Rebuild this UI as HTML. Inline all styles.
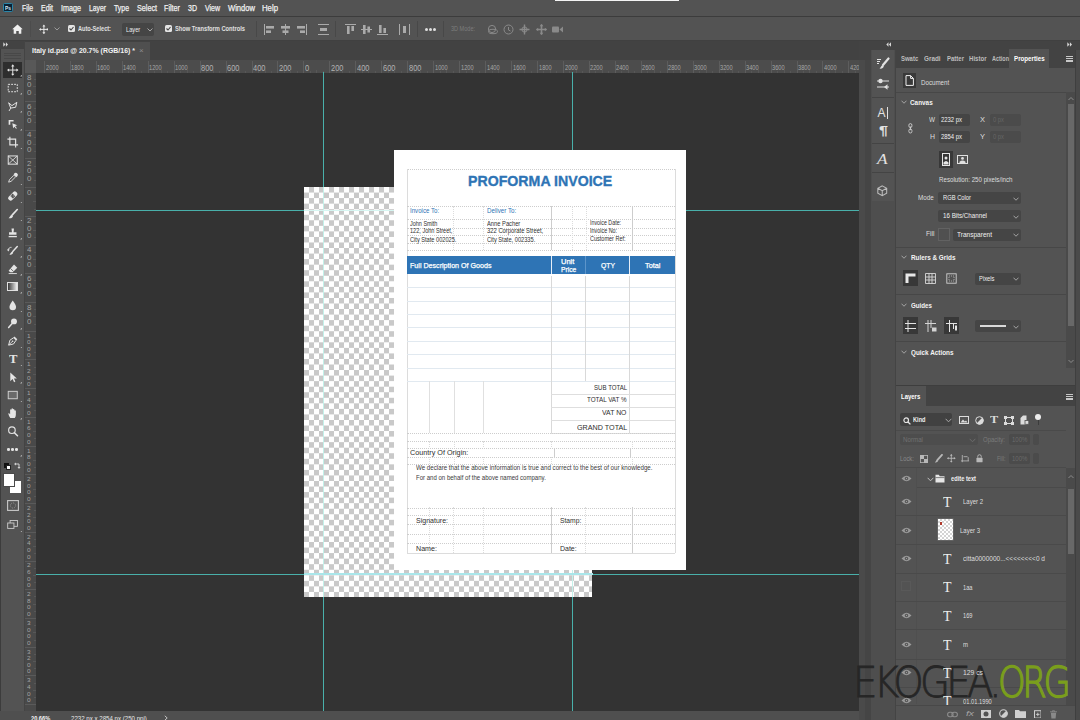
<!DOCTYPE html>
<html lang="en"><head><meta charset="utf-8"><title>Italy id.psd @ 20.7% (RGB/16)</title>
<style>
html,body{margin:0;padding:0}
body{width:1080px;height:720px;position:relative;overflow:hidden;background:#535353;font-family:"Liberation Sans",sans-serif}
#app{position:absolute;left:0;top:0;width:1080px;height:720px;overflow:hidden}
#app div,#app span,#app svg{position:absolute;display:block}
#app span{white-space:nowrap;transform-origin:0 50%}
</style></head><body><div id="app">
<div style="left:0px;top:0px;width:1080px;height:16px;background:#535353;"></div>
<div style="left:0px;top:16.3px;width:1080px;height:1px;background:#3c3c3c;"></div>
<div style="left:555px;top:0px;width:123.5px;height:1.2px;background:#f4f4f4;"></div>
<div style="left:3.4px;top:3.2px;width:9.8px;height:9.2px;background:#0a2236;border:1px solid #2a86a8;box-sizing:border-box;border-radius:1.5px"></div>
<span style="left:5.2px;top:4.5px;font-size:5.5px;line-height:7px;color:#d6ecfa;font-weight:bold;transform:scale(0.892,1.000);">Ps</span>
<span style="left:22px;top:3.4px;font-size:9px;line-height:11px;color:#f0f0f0;transform:scale(0.759,1.000);-webkit-text-stroke:0.25px #f0f0f0;">File</span>
<span style="left:41px;top:3.4px;font-size:9px;line-height:11px;color:#f0f0f0;transform:scale(0.774,1.000);-webkit-text-stroke:0.25px #f0f0f0;">Edit</span>
<span style="left:61px;top:3.4px;font-size:9px;line-height:11px;color:#f0f0f0;transform:scale(0.800,1.000);-webkit-text-stroke:0.25px #f0f0f0;">Image</span>
<span style="left:89px;top:3.4px;font-size:9px;line-height:11px;color:#f0f0f0;transform:scale(0.755,1.000);-webkit-text-stroke:0.25px #f0f0f0;">Layer</span>
<span style="left:114px;top:3.4px;font-size:9px;line-height:11px;color:#f0f0f0;transform:scale(0.769,1.000);-webkit-text-stroke:0.25px #f0f0f0;">Type</span>
<span style="left:137px;top:3.4px;font-size:9px;line-height:11px;color:#f0f0f0;transform:scale(0.800,1.000);-webkit-text-stroke:0.25px #f0f0f0;">Select</span>
<span style="left:164px;top:3.4px;font-size:9px;line-height:11px;color:#f0f0f0;transform:scale(0.800,1.000);-webkit-text-stroke:0.25px #f0f0f0;">Filter</span>
<span style="left:188px;top:3.4px;font-size:9px;line-height:11px;color:#f0f0f0;transform:scale(0.782,1.000);-webkit-text-stroke:0.25px #f0f0f0;">3D</span>
<span style="left:205px;top:3.4px;font-size:9px;line-height:11px;color:#f0f0f0;transform:scale(0.775,1.000);-webkit-text-stroke:0.25px #f0f0f0;">View</span>
<span style="left:228px;top:3.4px;font-size:9px;line-height:11px;color:#f0f0f0;transform:scale(0.844,1.000);-webkit-text-stroke:0.25px #f0f0f0;">Window</span>
<span style="left:262px;top:3.4px;font-size:9px;line-height:11px;color:#f0f0f0;transform:scale(0.864,1.000);-webkit-text-stroke:0.25px #f0f0f0;">Help</span>
<div style="left:0px;top:17px;width:1080px;height:24px;background:#535353;"></div>
<div style="left:0px;top:40px;width:1080px;height:1px;background:#404040;"></div>
<svg style="left:12px;top:23.8px;" width="11" height="10.4" viewBox="0 0 13 12"><path d="M6.5 0.5 L0.3 6.2 H2 V11.5 H5 V8 H8 V11.5 H11 V6.2 H12.7 Z" fill="#f0f0f0"/></svg>
<div style="left:30px;top:21px;width:1px;height:16px;background:#4c4c4c;"></div>
<svg style="left:38.5px;top:23.6px;" width="9.8" height="10.8" viewBox="0 0 12 12"><g stroke="#e8e8e8" stroke-width="1.2" fill="#e8e8e8"><path d="M6 1.5V10.5M1.5 6H10.5" fill="none"/><path d="M6 0L7.8 2.4H4.2Z M6 12L7.8 9.6H4.2Z M0 6L2.4 4.2V7.8Z M12 6L9.6 4.2V7.8Z" stroke="none"/></g></svg>
<svg style="left:54px;top:27px;" width="6" height="4" viewBox="0 0 6 4"><path d="M0.5 0.5L3 3L5.5 0.5" stroke="#9a9a9a" fill="none" stroke-width="1"/></svg>
<div style="left:68px;top:25px;width:7px;height:7px;background:#e4e4e4;border-radius:1.5px"></div>
<svg style="left:68px;top:25px;" width="7" height="7" viewBox="0 0 7 7"><path d="M1.5 3.5L3 5L5.5 2" stroke="#444" fill="none" stroke-width="1.1"/></svg>
<span style="left:78px;top:24.0px;font-size:8px;line-height:10px;color:#e0e0e0;font-weight:bold;transform:scale(0.700,1.000);">Auto-Select:</span>
<div style="left:122px;top:23.2px;width:31.6px;height:12.6px;background:#454545;border-radius:2px"></div>
<span style="left:126.3px;top:24.6px;font-size:8px;line-height:10px;color:#ececec;transform:scale(0.710,1.000);">Layer</span>
<svg style="left:147.2px;top:28px;" width="5.4" height="3.8" viewBox="0 0 5.4 3.8"><path d="M0.5 0.5L3 3L5.5 0.5" stroke="#aaa" fill="none" stroke-width="1"/></svg>
<div style="left:165px;top:25px;width:7px;height:7px;background:#e4e4e4;border-radius:1.5px"></div>
<svg style="left:165px;top:25px;" width="7" height="7" viewBox="0 0 7 7"><path d="M1.5 3.5L3 5L5.5 2" stroke="#444" fill="none" stroke-width="1.1"/></svg>
<span style="left:175px;top:24.0px;font-size:8px;line-height:10px;color:#e0e0e0;font-weight:bold;transform:scale(0.716,1.000);">Show Transform Controls</span>
<div style="left:256px;top:21px;width:1px;height:16px;background:#484848;"></div>
<svg style="left:264px;top:24px;" width="11" height="11" viewBox="0 0 11 11"><path d="M0.5 0V11" stroke="#aaaaaa"/><rect x="2" y="2" width="8" height="2.6" fill="#aaaaaa"/><rect x="2" y="6.4" width="5" height="2.6" fill="#aaaaaa"/></svg>
<svg style="left:280px;top:24px;" width="11" height="11" viewBox="0 0 11 11"><path d="M5.5 0V11" stroke="#aaaaaa"/><rect x="1" y="2" width="9" height="2.6" fill="#aaaaaa"/><rect x="2.5" y="6.4" width="6" height="2.6" fill="#aaaaaa"/></svg>
<svg style="left:296px;top:24px;" width="11" height="11" viewBox="0 0 11 11"><path d="M10.5 0V11" stroke="#aaaaaa"/><rect x="1" y="2" width="8" height="2.6" fill="#aaaaaa"/><rect x="4" y="6.4" width="5" height="2.6" fill="#aaaaaa"/></svg>
<svg style="left:318px;top:24px;" width="11" height="11" viewBox="0 0 11 11"><path d="M0 0.5H11M0 10.5H11" stroke="#aaaaaa"/><rect x="2" y="4" width="7" height="3" fill="#aaaaaa"/></svg>
<div style="left:335px;top:21px;width:1px;height:16px;background:#484848;"></div>
<svg style="left:345px;top:24px;" width="11" height="11" viewBox="0 0 11 11"><path d="M0 0.5H11" stroke="#aaaaaa"/><rect x="2" y="2" width="2.6" height="8" fill="#aaaaaa"/><rect x="6.4" y="2" width="2.6" height="5" fill="#aaaaaa"/></svg>
<svg style="left:361px;top:24px;" width="11" height="11" viewBox="0 0 11 11"><path d="M0 5.5H11" stroke="#aaaaaa"/><rect x="2" y="1" width="2.6" height="9" fill="#aaaaaa"/><rect x="6.4" y="2.5" width="2.6" height="6" fill="#aaaaaa"/></svg>
<svg style="left:377px;top:24px;" width="11" height="11" viewBox="0 0 11 11"><path d="M0 10.5H11" stroke="#aaaaaa"/><rect x="2" y="1" width="2.6" height="8" fill="#aaaaaa"/><rect x="6.4" y="4" width="2.6" height="5" fill="#aaaaaa"/></svg>
<svg style="left:399px;top:24px;" width="11" height="11" viewBox="0 0 11 11"><path d="M0.5 0V11M10.5 0V11" stroke="#aaaaaa"/><rect x="4" y="2" width="3" height="7" fill="#aaaaaa"/></svg>
<div style="left:417px;top:21px;width:1px;height:16px;background:#484848;"></div>
<div style="left:425.4px;top:27.6px;width:3px;height:3px;border-radius:50%;background:#e0e0e0"></div>
<div style="left:429.3px;top:27.6px;width:3px;height:3px;border-radius:50%;background:#e0e0e0"></div>
<div style="left:433.2px;top:27.6px;width:3px;height:3px;border-radius:50%;background:#e0e0e0"></div>
<div style="left:443px;top:21px;width:1px;height:16px;background:#484848;"></div>
<span style="left:451px;top:25.0px;font-size:7px;line-height:8px;color:#7d7d7d;transform:scale(0.791,1.000);">3D Mode:</span>
<svg style="left:487px;top:24px;" width="11" height="11" viewBox="0 0 11 11"><circle cx="5" cy="5" r="3.6" fill="none" stroke="#8a8a8a"/><ellipse cx="6" cy="7.5" rx="4.5" ry="2.2" fill="none" stroke="#8a8a8a"/></svg>
<svg style="left:503px;top:24px;" width="11" height="11" viewBox="0 0 11 11"><circle cx="5.5" cy="5.5" r="4.5" fill="none" stroke="#8a8a8a"/><path d="M5.5 3V6L7.5 7" fill="none" stroke="#8a8a8a"/></svg>
<svg style="left:519px;top:24px;" width="11" height="11" viewBox="0 0 11 11"><path d="M5.5 0.5V10.5M0.5 5.5H10.5" stroke="#8a8a8a" stroke-width="1.4"/><circle cx="5.5" cy="5.5" r="2.6" fill="none" stroke="#8a8a8a"/></svg>
<svg style="left:536px;top:24px;" width="11" height="11" viewBox="0 0 11 11"><path d="M5.5 0.5V10.5M0.5 5.5H10.5" stroke="#8a8a8a" stroke-width="1.6"/><path d="M5.5 0L7.3 2.2H3.7Z M5.5 11L7.3 8.8H3.7Z M0 5.5L2.2 3.7V7.3Z M11 5.5L8.8 3.7V7.3Z" fill="#8a8a8a"/></svg>
<svg style="left:552px;top:25px;" width="12" height="9" viewBox="0 0 12 9"><rect x="0" y="1.5" width="7" height="6" rx="1" fill="#8a8a8a"/><path d="M7.5 4.5L11 1.5V7.5Z" fill="#8a8a8a"/></svg>
<div style="left:0px;top:41px;width:1080px;height:20px;background:#424242;"></div>
<div style="left:25px;top:42px;width:125px;height:18.5px;background:#4f4f4f;"></div>
<span style="left:32px;top:46.3px;font-size:8px;line-height:10px;color:#f2f2f2;font-weight:bold;transform:scale(0.869,1.000);">Italy id.psd @ 20.7% (RGB/16) *</span>
<span style="left:139px;top:46.0px;font-size:8px;line-height:10px;color:#8c8c8c;">×</span>
<div style="left:36px;top:72px;width:823px;height:639px;background:#333333;"></div>
<div style="left:25px;top:60px;width:834px;height:13px;background:#4c4c4c;"></div>
<div style="left:25px;top:60px;width:11px;height:651px;background:#494949;"></div>
<div style="left:25px;top:60px;width:11px;height:13px;background:#585858;"></div>
<div style="left:43.9px;top:61px;width:1px;height:12px;background:#5d5d5d;"></div>
<span style="left:45.49999999999998px;top:64.0px;font-size:6.6px;line-height:8px;color:#a6a6a6;transform:scale(0.858,1.000);">2000</span>
<div style="left:50.4px;top:71px;width:1px;height:2px;background:#575757;"></div>
<div style="left:56.9px;top:70px;width:1px;height:3px;background:#575757;"></div>
<div style="left:63.4px;top:71px;width:1px;height:2px;background:#575757;"></div>
<div style="left:69.8px;top:61px;width:1px;height:12px;background:#5d5d5d;"></div>
<span style="left:71.44999999999999px;top:64.0px;font-size:6.6px;line-height:8px;color:#a6a6a6;transform:scale(0.858,1.000);">1800</span>
<div style="left:76.3px;top:71px;width:1px;height:2px;background:#575757;"></div>
<div style="left:82.8px;top:70px;width:1px;height:3px;background:#575757;"></div>
<div style="left:89.3px;top:71px;width:1px;height:2px;background:#575757;"></div>
<div style="left:95.8px;top:61px;width:1px;height:12px;background:#5d5d5d;"></div>
<span style="left:97.39999999999998px;top:64.0px;font-size:6.6px;line-height:8px;color:#a6a6a6;transform:scale(0.858,1.000);">1600</span>
<div style="left:102.3px;top:71px;width:1px;height:2px;background:#575757;"></div>
<div style="left:108.8px;top:70px;width:1px;height:3px;background:#575757;"></div>
<div style="left:115.3px;top:71px;width:1px;height:2px;background:#575757;"></div>
<div style="left:121.7px;top:61px;width:1px;height:12px;background:#5d5d5d;"></div>
<span style="left:123.34999999999997px;top:64.0px;font-size:6.6px;line-height:8px;color:#a6a6a6;transform:scale(0.858,1.000);">1400</span>
<div style="left:128.2px;top:71px;width:1px;height:2px;background:#575757;"></div>
<div style="left:134.7px;top:70px;width:1px;height:3px;background:#575757;"></div>
<div style="left:141.2px;top:71px;width:1px;height:2px;background:#575757;"></div>
<div style="left:147.7px;top:61px;width:1px;height:12px;background:#5d5d5d;"></div>
<span style="left:149.29999999999998px;top:64.0px;font-size:6.6px;line-height:8px;color:#a6a6a6;transform:scale(0.858,1.000);">1200</span>
<div style="left:154.2px;top:71px;width:1px;height:2px;background:#575757;"></div>
<div style="left:160.7px;top:70px;width:1px;height:3px;background:#575757;"></div>
<div style="left:167.2px;top:71px;width:1px;height:2px;background:#575757;"></div>
<div style="left:173.6px;top:61px;width:1px;height:12px;background:#5d5d5d;"></div>
<span style="left:175.24999999999997px;top:64.0px;font-size:6.6px;line-height:8px;color:#a6a6a6;transform:scale(0.858,1.000);">1000</span>
<div style="left:180.1px;top:71px;width:1px;height:2px;background:#575757;"></div>
<div style="left:186.6px;top:70px;width:1px;height:3px;background:#575757;"></div>
<div style="left:193.1px;top:71px;width:1px;height:2px;background:#575757;"></div>
<div style="left:199.6px;top:61px;width:1px;height:12px;background:#5d5d5d;"></div>
<span style="left:200.99999999999997px;top:62.5px;font-size:8.8px;line-height:11px;color:#b2b2b2;transform:scale(0.845,1.000);">800</span>
<div style="left:206.1px;top:71px;width:1px;height:2px;background:#575757;"></div>
<div style="left:212.6px;top:70px;width:1px;height:3px;background:#575757;"></div>
<div style="left:219.1px;top:71px;width:1px;height:2px;background:#575757;"></div>
<div style="left:225.5px;top:61px;width:1px;height:12px;background:#5d5d5d;"></div>
<span style="left:226.95px;top:62.5px;font-size:8.8px;line-height:11px;color:#b2b2b2;transform:scale(0.845,1.000);">600</span>
<div style="left:232.0px;top:71px;width:1px;height:2px;background:#575757;"></div>
<div style="left:238.5px;top:70px;width:1px;height:3px;background:#575757;"></div>
<div style="left:245.0px;top:71px;width:1px;height:2px;background:#575757;"></div>
<div style="left:251.5px;top:61px;width:1px;height:12px;background:#5d5d5d;"></div>
<span style="left:252.89999999999998px;top:62.5px;font-size:8.8px;line-height:11px;color:#b2b2b2;transform:scale(0.845,1.000);">400</span>
<div style="left:258.0px;top:71px;width:1px;height:2px;background:#575757;"></div>
<div style="left:264.5px;top:70px;width:1px;height:3px;background:#575757;"></div>
<div style="left:271.0px;top:71px;width:1px;height:2px;background:#575757;"></div>
<div style="left:277.4px;top:61px;width:1px;height:12px;background:#5d5d5d;"></div>
<span style="left:278.84999999999997px;top:62.5px;font-size:8.8px;line-height:11px;color:#b2b2b2;transform:scale(0.845,1.000);">200</span>
<div style="left:283.9px;top:71px;width:1px;height:2px;background:#575757;"></div>
<div style="left:290.4px;top:70px;width:1px;height:3px;background:#575757;"></div>
<div style="left:296.9px;top:71px;width:1px;height:2px;background:#575757;"></div>
<div style="left:303.4px;top:61px;width:1px;height:12px;background:#5d5d5d;"></div>
<span style="left:305.0px;top:62.5px;font-size:8.8px;line-height:11px;color:#b2b2b2;transform:scale(0.858,1.000);">0</span>
<div style="left:309.9px;top:71px;width:1px;height:2px;background:#575757;"></div>
<div style="left:316.4px;top:70px;width:1px;height:3px;background:#575757;"></div>
<div style="left:322.9px;top:71px;width:1px;height:2px;background:#575757;"></div>
<div style="left:329.3px;top:61px;width:1px;height:12px;background:#5d5d5d;"></div>
<span style="left:330.74999999999994px;top:62.5px;font-size:8.8px;line-height:11px;color:#b2b2b2;transform:scale(0.845,1.000);">200</span>
<div style="left:335.8px;top:71px;width:1px;height:2px;background:#575757;"></div>
<div style="left:342.3px;top:70px;width:1px;height:3px;background:#575757;"></div>
<div style="left:348.8px;top:71px;width:1px;height:2px;background:#575757;"></div>
<div style="left:355.3px;top:61px;width:1px;height:12px;background:#5d5d5d;"></div>
<span style="left:356.69999999999993px;top:62.5px;font-size:8.8px;line-height:11px;color:#b2b2b2;transform:scale(0.845,1.000);">400</span>
<div style="left:361.8px;top:71px;width:1px;height:2px;background:#575757;"></div>
<div style="left:368.3px;top:70px;width:1px;height:3px;background:#575757;"></div>
<div style="left:374.8px;top:71px;width:1px;height:2px;background:#575757;"></div>
<div style="left:381.2px;top:61px;width:1px;height:12px;background:#5d5d5d;"></div>
<span style="left:382.65px;top:62.5px;font-size:8.8px;line-height:11px;color:#b2b2b2;transform:scale(0.845,1.000);">600</span>
<div style="left:387.7px;top:71px;width:1px;height:2px;background:#575757;"></div>
<div style="left:394.2px;top:70px;width:1px;height:3px;background:#575757;"></div>
<div style="left:400.7px;top:71px;width:1px;height:2px;background:#575757;"></div>
<div style="left:407.2px;top:61px;width:1px;height:12px;background:#5d5d5d;"></div>
<span style="left:408.59999999999997px;top:62.5px;font-size:8.8px;line-height:11px;color:#b2b2b2;transform:scale(0.845,1.000);">800</span>
<div style="left:413.7px;top:71px;width:1px;height:2px;background:#575757;"></div>
<div style="left:420.2px;top:70px;width:1px;height:3px;background:#575757;"></div>
<div style="left:426.7px;top:71px;width:1px;height:2px;background:#575757;"></div>
<div style="left:433.1px;top:61px;width:1px;height:12px;background:#5d5d5d;"></div>
<span style="left:434.75px;top:64.0px;font-size:6.6px;line-height:8px;color:#a6a6a6;transform:scale(0.858,1.000);">1000</span>
<div style="left:439.6px;top:71px;width:1px;height:2px;background:#575757;"></div>
<div style="left:446.1px;top:70px;width:1px;height:3px;background:#575757;"></div>
<div style="left:452.6px;top:71px;width:1px;height:2px;background:#575757;"></div>
<div style="left:459.1px;top:61px;width:1px;height:12px;background:#5d5d5d;"></div>
<span style="left:460.7px;top:64.0px;font-size:6.6px;line-height:8px;color:#a6a6a6;transform:scale(0.858,1.000);">1200</span>
<div style="left:465.6px;top:71px;width:1px;height:2px;background:#575757;"></div>
<div style="left:472.1px;top:70px;width:1px;height:3px;background:#575757;"></div>
<div style="left:478.6px;top:71px;width:1px;height:2px;background:#575757;"></div>
<div style="left:485.0px;top:61px;width:1px;height:12px;background:#5d5d5d;"></div>
<span style="left:486.65px;top:64.0px;font-size:6.6px;line-height:8px;color:#a6a6a6;transform:scale(0.858,1.000);">1400</span>
<div style="left:491.5px;top:71px;width:1px;height:2px;background:#575757;"></div>
<div style="left:498.0px;top:70px;width:1px;height:3px;background:#575757;"></div>
<div style="left:504.5px;top:71px;width:1px;height:2px;background:#575757;"></div>
<div style="left:511.0px;top:61px;width:1px;height:12px;background:#5d5d5d;"></div>
<span style="left:512.6px;top:64.0px;font-size:6.6px;line-height:8px;color:#a6a6a6;transform:scale(0.858,1.000);">1600</span>
<div style="left:517.5px;top:71px;width:1px;height:2px;background:#575757;"></div>
<div style="left:524.0px;top:70px;width:1px;height:3px;background:#575757;"></div>
<div style="left:530.5px;top:71px;width:1px;height:2px;background:#575757;"></div>
<div style="left:536.9px;top:61px;width:1px;height:12px;background:#5d5d5d;"></div>
<span style="left:538.55px;top:64.0px;font-size:6.6px;line-height:8px;color:#a6a6a6;transform:scale(0.858,1.000);">1800</span>
<div style="left:543.4px;top:71px;width:1px;height:2px;background:#575757;"></div>
<div style="left:549.9px;top:70px;width:1px;height:3px;background:#575757;"></div>
<div style="left:556.4px;top:71px;width:1px;height:2px;background:#575757;"></div>
<div style="left:562.9px;top:61px;width:1px;height:12px;background:#5d5d5d;"></div>
<span style="left:564.5px;top:64.0px;font-size:6.6px;line-height:8px;color:#a6a6a6;transform:scale(0.858,1.000);">2000</span>
<div style="left:569.4px;top:71px;width:1px;height:2px;background:#575757;"></div>
<div style="left:575.9px;top:70px;width:1px;height:3px;background:#575757;"></div>
<div style="left:582.4px;top:71px;width:1px;height:2px;background:#575757;"></div>
<div style="left:588.8px;top:61px;width:1px;height:12px;background:#5d5d5d;"></div>
<span style="left:590.4499999999999px;top:64.0px;font-size:6.6px;line-height:8px;color:#a6a6a6;transform:scale(0.858,1.000);">2200</span>
<div style="left:595.3px;top:71px;width:1px;height:2px;background:#575757;"></div>
<div style="left:601.8px;top:70px;width:1px;height:3px;background:#575757;"></div>
<div style="left:608.3px;top:71px;width:1px;height:2px;background:#575757;"></div>
<div style="left:614.8px;top:61px;width:1px;height:12px;background:#5d5d5d;"></div>
<span style="left:616.4px;top:64.0px;font-size:6.6px;line-height:8px;color:#a6a6a6;transform:scale(0.858,1.000);">2400</span>
<div style="left:621.3px;top:71px;width:1px;height:2px;background:#575757;"></div>
<div style="left:627.8px;top:70px;width:1px;height:3px;background:#575757;"></div>
<div style="left:634.3px;top:71px;width:1px;height:2px;background:#575757;"></div>
<div style="left:640.8px;top:61px;width:1px;height:12px;background:#5d5d5d;"></div>
<span style="left:642.35px;top:64.0px;font-size:6.6px;line-height:8px;color:#a6a6a6;transform:scale(0.858,1.000);">2600</span>
<div style="left:647.2px;top:71px;width:1px;height:2px;background:#575757;"></div>
<div style="left:653.7px;top:70px;width:1px;height:3px;background:#575757;"></div>
<div style="left:660.2px;top:71px;width:1px;height:2px;background:#575757;"></div>
<div style="left:666.7px;top:61px;width:1px;height:12px;background:#5d5d5d;"></div>
<span style="left:668.3000000000001px;top:64.0px;font-size:6.6px;line-height:8px;color:#a6a6a6;transform:scale(0.858,1.000);">2800</span>
<div style="left:673.2px;top:71px;width:1px;height:2px;background:#575757;"></div>
<div style="left:679.7px;top:70px;width:1px;height:3px;background:#575757;"></div>
<div style="left:686.2px;top:71px;width:1px;height:2px;background:#575757;"></div>
<div style="left:692.6px;top:61px;width:1px;height:12px;background:#5d5d5d;"></div>
<span style="left:694.25px;top:64.0px;font-size:6.6px;line-height:8px;color:#a6a6a6;transform:scale(0.858,1.000);">3000</span>
<div style="left:699.1px;top:71px;width:1px;height:2px;background:#575757;"></div>
<div style="left:705.6px;top:70px;width:1px;height:3px;background:#575757;"></div>
<div style="left:712.1px;top:71px;width:1px;height:2px;background:#575757;"></div>
<div style="left:718.6px;top:61px;width:1px;height:12px;background:#5d5d5d;"></div>
<span style="left:720.1999999999999px;top:64.0px;font-size:6.6px;line-height:8px;color:#a6a6a6;transform:scale(0.858,1.000);">3200</span>
<div style="left:725.1px;top:71px;width:1px;height:2px;background:#575757;"></div>
<div style="left:731.6px;top:70px;width:1px;height:3px;background:#575757;"></div>
<div style="left:738.1px;top:71px;width:1px;height:2px;background:#575757;"></div>
<div style="left:744.5px;top:61px;width:1px;height:12px;background:#5d5d5d;"></div>
<span style="left:746.15px;top:64.0px;font-size:6.6px;line-height:8px;color:#a6a6a6;transform:scale(0.858,1.000);">3400</span>
<div style="left:751.0px;top:71px;width:1px;height:2px;background:#575757;"></div>
<div style="left:757.5px;top:70px;width:1px;height:3px;background:#575757;"></div>
<div style="left:764.0px;top:71px;width:1px;height:2px;background:#575757;"></div>
<div style="left:770.5px;top:61px;width:1px;height:12px;background:#5d5d5d;"></div>
<span style="left:772.1px;top:64.0px;font-size:6.6px;line-height:8px;color:#a6a6a6;transform:scale(0.858,1.000);">3600</span>
<div style="left:777.0px;top:71px;width:1px;height:2px;background:#575757;"></div>
<div style="left:783.5px;top:70px;width:1px;height:3px;background:#575757;"></div>
<div style="left:790.0px;top:71px;width:1px;height:2px;background:#575757;"></div>
<div style="left:796.5px;top:61px;width:1px;height:12px;background:#5d5d5d;"></div>
<span style="left:798.0500000000001px;top:64.0px;font-size:6.6px;line-height:8px;color:#a6a6a6;transform:scale(0.858,1.000);">3800</span>
<div style="left:802.9px;top:71px;width:1px;height:2px;background:#575757;"></div>
<div style="left:809.4px;top:70px;width:1px;height:3px;background:#575757;"></div>
<div style="left:815.9px;top:71px;width:1px;height:2px;background:#575757;"></div>
<div style="left:822.4px;top:61px;width:1px;height:12px;background:#5d5d5d;"></div>
<span style="left:824.0px;top:64.0px;font-size:6.6px;line-height:8px;color:#a6a6a6;transform:scale(0.858,1.000);">4000</span>
<div style="left:828.9px;top:71px;width:1px;height:2px;background:#575757;"></div>
<div style="left:835.4px;top:70px;width:1px;height:3px;background:#575757;"></div>
<div style="left:841.9px;top:71px;width:1px;height:2px;background:#575757;"></div>
<div style="left:848.3px;top:61px;width:1px;height:12px;background:#5d5d5d;"></div>
<span style="left:849.9499999999999px;top:64.0px;font-size:6.6px;line-height:8px;color:#a6a6a6;transform:scale(0.858,1.000);">4200</span>
<div style="left:854.8px;top:71px;width:1px;height:2px;background:#575757;"></div>
<span style="left:26.6px;top:72.8px;font-size:7.6px;line-height:9px;color:#a4a4a4;transform:scale(1.041,1.000);">8</span>
<span style="left:26.6px;top:80.2px;font-size:7.6px;line-height:9px;color:#a4a4a4;transform:scale(1.041,1.000);">0</span>
<span style="left:26.6px;top:87.6px;font-size:7.6px;line-height:9px;color:#a4a4a4;transform:scale(1.041,1.000);">0</span>
<div style="left:34px;top:79.3px;width:2px;height:1px;background:#575757;"></div>
<div style="left:33px;top:86.4px;width:3px;height:1px;background:#575757;"></div>
<div style="left:34px;top:93.6px;width:2px;height:1px;background:#575757;"></div>
<div style="left:25px;top:100.8px;width:11px;height:1px;background:#5a5a5a;"></div>
<span style="left:26.6px;top:101.5px;font-size:7.6px;line-height:9px;color:#a4a4a4;transform:scale(1.041,1.000);">6</span>
<span style="left:26.6px;top:108.9px;font-size:7.6px;line-height:9px;color:#a4a4a4;transform:scale(1.041,1.000);">0</span>
<span style="left:26.6px;top:116.3px;font-size:7.6px;line-height:9px;color:#a4a4a4;transform:scale(1.041,1.000);">0</span>
<div style="left:34px;top:108.0px;width:2px;height:1px;background:#575757;"></div>
<div style="left:33px;top:115.2px;width:3px;height:1px;background:#575757;"></div>
<div style="left:34px;top:122.4px;width:2px;height:1px;background:#575757;"></div>
<div style="left:25px;top:129.5px;width:11px;height:1px;background:#5a5a5a;"></div>
<span style="left:26.6px;top:130.2px;font-size:7.6px;line-height:9px;color:#a4a4a4;transform:scale(1.041,1.000);">4</span>
<span style="left:26.6px;top:137.6px;font-size:7.6px;line-height:9px;color:#a4a4a4;transform:scale(1.041,1.000);">0</span>
<span style="left:26.6px;top:145.0px;font-size:7.6px;line-height:9px;color:#a4a4a4;transform:scale(1.041,1.000);">0</span>
<div style="left:34px;top:136.7px;width:2px;height:1px;background:#575757;"></div>
<div style="left:33px;top:143.9px;width:3px;height:1px;background:#575757;"></div>
<div style="left:34px;top:151.1px;width:2px;height:1px;background:#575757;"></div>
<div style="left:25px;top:158.3px;width:11px;height:1px;background:#5a5a5a;"></div>
<span style="left:26.6px;top:159.0px;font-size:7.6px;line-height:9px;color:#a4a4a4;transform:scale(1.041,1.000);">2</span>
<span style="left:26.6px;top:166.4px;font-size:7.6px;line-height:9px;color:#a4a4a4;transform:scale(1.041,1.000);">0</span>
<span style="left:26.6px;top:173.8px;font-size:7.6px;line-height:9px;color:#a4a4a4;transform:scale(1.041,1.000);">0</span>
<div style="left:34px;top:165.5px;width:2px;height:1px;background:#575757;"></div>
<div style="left:33px;top:172.6px;width:3px;height:1px;background:#575757;"></div>
<div style="left:34px;top:179.8px;width:2px;height:1px;background:#575757;"></div>
<div style="left:25px;top:187.0px;width:11px;height:1px;background:#5a5a5a;"></div>
<span style="left:26.6px;top:187.7px;font-size:7.6px;line-height:9px;color:#a4a4a4;transform:scale(1.041,1.000);">0</span>
<div style="left:34px;top:194.2px;width:2px;height:1px;background:#575757;"></div>
<div style="left:33px;top:201.4px;width:3px;height:1px;background:#575757;"></div>
<div style="left:34px;top:208.5px;width:2px;height:1px;background:#575757;"></div>
<div style="left:25px;top:215.7px;width:11px;height:1px;background:#5a5a5a;"></div>
<span style="left:26.6px;top:216.4px;font-size:7.6px;line-height:9px;color:#a4a4a4;transform:scale(1.041,1.000);">2</span>
<span style="left:26.6px;top:223.8px;font-size:7.6px;line-height:9px;color:#a4a4a4;transform:scale(1.041,1.000);">0</span>
<span style="left:26.6px;top:231.2px;font-size:7.6px;line-height:9px;color:#a4a4a4;transform:scale(1.041,1.000);">0</span>
<div style="left:34px;top:222.9px;width:2px;height:1px;background:#575757;"></div>
<div style="left:33px;top:230.1px;width:3px;height:1px;background:#575757;"></div>
<div style="left:34px;top:237.3px;width:2px;height:1px;background:#575757;"></div>
<div style="left:25px;top:244.5px;width:11px;height:1px;background:#5a5a5a;"></div>
<span style="left:26.6px;top:245.2px;font-size:7.6px;line-height:9px;color:#a4a4a4;transform:scale(1.041,1.000);">4</span>
<span style="left:26.6px;top:252.6px;font-size:7.6px;line-height:9px;color:#a4a4a4;transform:scale(1.041,1.000);">0</span>
<span style="left:26.6px;top:260.0px;font-size:7.6px;line-height:9px;color:#a4a4a4;transform:scale(1.041,1.000);">0</span>
<div style="left:34px;top:251.6px;width:2px;height:1px;background:#575757;"></div>
<div style="left:33px;top:258.8px;width:3px;height:1px;background:#575757;"></div>
<div style="left:34px;top:266.0px;width:2px;height:1px;background:#575757;"></div>
<div style="left:25px;top:273.2px;width:11px;height:1px;background:#5a5a5a;"></div>
<span style="left:26.6px;top:273.9px;font-size:7.6px;line-height:9px;color:#a4a4a4;transform:scale(1.041,1.000);">6</span>
<span style="left:26.6px;top:281.3px;font-size:7.6px;line-height:9px;color:#a4a4a4;transform:scale(1.041,1.000);">0</span>
<span style="left:26.6px;top:288.7px;font-size:7.6px;line-height:9px;color:#a4a4a4;transform:scale(1.041,1.000);">0</span>
<div style="left:34px;top:280.4px;width:2px;height:1px;background:#575757;"></div>
<div style="left:33px;top:287.6px;width:3px;height:1px;background:#575757;"></div>
<div style="left:34px;top:294.7px;width:2px;height:1px;background:#575757;"></div>
<div style="left:25px;top:301.9px;width:11px;height:1px;background:#5a5a5a;"></div>
<span style="left:26.6px;top:302.6px;font-size:7.6px;line-height:9px;color:#a4a4a4;transform:scale(1.041,1.000);">8</span>
<span style="left:26.6px;top:310.0px;font-size:7.6px;line-height:9px;color:#a4a4a4;transform:scale(1.041,1.000);">0</span>
<span style="left:26.6px;top:317.4px;font-size:7.6px;line-height:9px;color:#a4a4a4;transform:scale(1.041,1.000);">0</span>
<div style="left:34px;top:309.1px;width:2px;height:1px;background:#575757;"></div>
<div style="left:33px;top:316.3px;width:3px;height:1px;background:#575757;"></div>
<div style="left:34px;top:323.5px;width:2px;height:1px;background:#575757;"></div>
<div style="left:25px;top:330.6px;width:11px;height:1px;background:#5a5a5a;"></div>
<span style="left:26.6px;top:332.5px;font-size:5.8px;line-height:7px;color:#a4a4a4;transform:scale(1.116,1.000);">1</span>
<span style="left:26.6px;top:339.1px;font-size:5.8px;line-height:7px;color:#a4a4a4;transform:scale(1.116,1.000);">0</span>
<span style="left:26.6px;top:345.7px;font-size:5.8px;line-height:7px;color:#a4a4a4;transform:scale(1.116,1.000);">0</span>
<span style="left:26.6px;top:352.3px;font-size:5.8px;line-height:7px;color:#a4a4a4;transform:scale(1.116,1.000);">0</span>
<div style="left:34px;top:337.8px;width:2px;height:1px;background:#575757;"></div>
<div style="left:33px;top:345.0px;width:3px;height:1px;background:#575757;"></div>
<div style="left:34px;top:352.2px;width:2px;height:1px;background:#575757;"></div>
<div style="left:25px;top:359.4px;width:11px;height:1px;background:#5a5a5a;"></div>
<span style="left:26.6px;top:361.3px;font-size:5.8px;line-height:7px;color:#a4a4a4;transform:scale(1.116,1.000);">1</span>
<span style="left:26.6px;top:367.9px;font-size:5.8px;line-height:7px;color:#a4a4a4;transform:scale(1.116,1.000);">2</span>
<span style="left:26.6px;top:374.5px;font-size:5.8px;line-height:7px;color:#a4a4a4;transform:scale(1.116,1.000);">0</span>
<span style="left:26.6px;top:381.1px;font-size:5.8px;line-height:7px;color:#a4a4a4;transform:scale(1.116,1.000);">0</span>
<div style="left:34px;top:366.6px;width:2px;height:1px;background:#575757;"></div>
<div style="left:33px;top:373.7px;width:3px;height:1px;background:#575757;"></div>
<div style="left:34px;top:380.9px;width:2px;height:1px;background:#575757;"></div>
<div style="left:25px;top:388.1px;width:11px;height:1px;background:#5a5a5a;"></div>
<span style="left:26.6px;top:390.0px;font-size:5.8px;line-height:7px;color:#a4a4a4;transform:scale(1.116,1.000);">1</span>
<span style="left:26.6px;top:396.6px;font-size:5.8px;line-height:7px;color:#a4a4a4;transform:scale(1.116,1.000);">4</span>
<span style="left:26.6px;top:403.2px;font-size:5.8px;line-height:7px;color:#a4a4a4;transform:scale(1.116,1.000);">0</span>
<span style="left:26.6px;top:409.8px;font-size:5.8px;line-height:7px;color:#a4a4a4;transform:scale(1.116,1.000);">0</span>
<div style="left:34px;top:395.3px;width:2px;height:1px;background:#575757;"></div>
<div style="left:33px;top:402.5px;width:3px;height:1px;background:#575757;"></div>
<div style="left:34px;top:409.7px;width:2px;height:1px;background:#575757;"></div>
<div style="left:25px;top:416.8px;width:11px;height:1px;background:#5a5a5a;"></div>
<span style="left:26.6px;top:418.7px;font-size:5.8px;line-height:7px;color:#a4a4a4;transform:scale(1.116,1.000);">1</span>
<span style="left:26.6px;top:425.3px;font-size:5.8px;line-height:7px;color:#a4a4a4;transform:scale(1.116,1.000);">6</span>
<span style="left:26.6px;top:431.9px;font-size:5.8px;line-height:7px;color:#a4a4a4;transform:scale(1.116,1.000);">0</span>
<span style="left:26.6px;top:438.5px;font-size:5.8px;line-height:7px;color:#a4a4a4;transform:scale(1.116,1.000);">0</span>
<div style="left:34px;top:424.0px;width:2px;height:1px;background:#575757;"></div>
<div style="left:33px;top:431.2px;width:3px;height:1px;background:#575757;"></div>
<div style="left:34px;top:438.4px;width:2px;height:1px;background:#575757;"></div>
<div style="left:25px;top:445.6px;width:11px;height:1px;background:#5a5a5a;"></div>
<span style="left:26.6px;top:447.5px;font-size:5.8px;line-height:7px;color:#a4a4a4;transform:scale(1.116,1.000);">1</span>
<span style="left:26.6px;top:454.1px;font-size:5.8px;line-height:7px;color:#a4a4a4;transform:scale(1.116,1.000);">8</span>
<span style="left:26.6px;top:460.7px;font-size:5.8px;line-height:7px;color:#a4a4a4;transform:scale(1.116,1.000);">0</span>
<span style="left:26.6px;top:467.3px;font-size:5.8px;line-height:7px;color:#a4a4a4;transform:scale(1.116,1.000);">0</span>
<div style="left:34px;top:452.8px;width:2px;height:1px;background:#575757;"></div>
<div style="left:33px;top:459.9px;width:3px;height:1px;background:#575757;"></div>
<div style="left:34px;top:467.1px;width:2px;height:1px;background:#575757;"></div>
<div style="left:25px;top:474.3px;width:11px;height:1px;background:#5a5a5a;"></div>
<span style="left:26.6px;top:476.2px;font-size:5.8px;line-height:7px;color:#a4a4a4;transform:scale(1.116,1.000);">2</span>
<span style="left:26.6px;top:482.8px;font-size:5.8px;line-height:7px;color:#a4a4a4;transform:scale(1.116,1.000);">0</span>
<span style="left:26.6px;top:489.4px;font-size:5.8px;line-height:7px;color:#a4a4a4;transform:scale(1.116,1.000);">0</span>
<span style="left:26.6px;top:496.0px;font-size:5.8px;line-height:7px;color:#a4a4a4;transform:scale(1.116,1.000);">0</span>
<div style="left:34px;top:481.5px;width:2px;height:1px;background:#575757;"></div>
<div style="left:33px;top:488.7px;width:3px;height:1px;background:#575757;"></div>
<div style="left:34px;top:495.8px;width:2px;height:1px;background:#575757;"></div>
<div style="left:25px;top:503.0px;width:11px;height:1px;background:#5a5a5a;"></div>
<span style="left:26.6px;top:504.9px;font-size:5.8px;line-height:7px;color:#a4a4a4;transform:scale(1.116,1.000);">2</span>
<span style="left:26.6px;top:511.5px;font-size:5.8px;line-height:7px;color:#a4a4a4;transform:scale(1.116,1.000);">2</span>
<span style="left:26.6px;top:518.1px;font-size:5.8px;line-height:7px;color:#a4a4a4;transform:scale(1.116,1.000);">0</span>
<span style="left:26.6px;top:524.7px;font-size:5.8px;line-height:7px;color:#a4a4a4;transform:scale(1.116,1.000);">0</span>
<div style="left:34px;top:510.2px;width:2px;height:1px;background:#575757;"></div>
<div style="left:33px;top:517.4px;width:3px;height:1px;background:#575757;"></div>
<div style="left:34px;top:524.6px;width:2px;height:1px;background:#575757;"></div>
<div style="left:25px;top:531.8px;width:11px;height:1px;background:#5a5a5a;"></div>
<span style="left:26.6px;top:533.7px;font-size:5.8px;line-height:7px;color:#a4a4a4;transform:scale(1.116,1.000);">2</span>
<span style="left:26.6px;top:540.3px;font-size:5.8px;line-height:7px;color:#a4a4a4;transform:scale(1.116,1.000);">4</span>
<span style="left:26.6px;top:546.9px;font-size:5.8px;line-height:7px;color:#a4a4a4;transform:scale(1.116,1.000);">0</span>
<span style="left:26.6px;top:553.5px;font-size:5.8px;line-height:7px;color:#a4a4a4;transform:scale(1.116,1.000);">0</span>
<div style="left:34px;top:538.9px;width:2px;height:1px;background:#575757;"></div>
<div style="left:33px;top:546.1px;width:3px;height:1px;background:#575757;"></div>
<div style="left:34px;top:553.3px;width:2px;height:1px;background:#575757;"></div>
<div style="left:25px;top:560.5px;width:11px;height:1px;background:#5a5a5a;"></div>
<span style="left:26.6px;top:562.4px;font-size:5.8px;line-height:7px;color:#a4a4a4;transform:scale(1.116,1.000);">2</span>
<span style="left:26.6px;top:569.0px;font-size:5.8px;line-height:7px;color:#a4a4a4;transform:scale(1.116,1.000);">6</span>
<span style="left:26.6px;top:575.6px;font-size:5.8px;line-height:7px;color:#a4a4a4;transform:scale(1.116,1.000);">0</span>
<span style="left:26.6px;top:582.2px;font-size:5.8px;line-height:7px;color:#a4a4a4;transform:scale(1.116,1.000);">0</span>
<div style="left:34px;top:567.7px;width:2px;height:1px;background:#575757;"></div>
<div style="left:33px;top:574.9px;width:3px;height:1px;background:#575757;"></div>
<div style="left:34px;top:582.0px;width:2px;height:1px;background:#575757;"></div>
<div style="left:25px;top:589.2px;width:11px;height:1px;background:#5a5a5a;"></div>
<span style="left:26.6px;top:591.1px;font-size:5.8px;line-height:7px;color:#a4a4a4;transform:scale(1.116,1.000);">2</span>
<span style="left:26.6px;top:597.7px;font-size:5.8px;line-height:7px;color:#a4a4a4;transform:scale(1.116,1.000);">8</span>
<span style="left:26.6px;top:604.3px;font-size:5.8px;line-height:7px;color:#a4a4a4;transform:scale(1.116,1.000);">0</span>
<span style="left:26.6px;top:610.9px;font-size:5.8px;line-height:7px;color:#a4a4a4;transform:scale(1.116,1.000);">0</span>
<div style="left:34px;top:596.4px;width:2px;height:1px;background:#575757;"></div>
<div style="left:33px;top:603.6px;width:3px;height:1px;background:#575757;"></div>
<div style="left:34px;top:610.8px;width:2px;height:1px;background:#575757;"></div>
<div style="left:25px;top:618.0px;width:11px;height:1px;background:#5a5a5a;"></div>
<span style="left:26.6px;top:619.9px;font-size:5.8px;line-height:7px;color:#a4a4a4;transform:scale(1.116,1.000);">3</span>
<span style="left:26.6px;top:626.5px;font-size:5.8px;line-height:7px;color:#a4a4a4;transform:scale(1.116,1.000);">0</span>
<span style="left:26.6px;top:633.1px;font-size:5.8px;line-height:7px;color:#a4a4a4;transform:scale(1.116,1.000);">0</span>
<span style="left:26.6px;top:639.6px;font-size:5.8px;line-height:7px;color:#a4a4a4;transform:scale(1.116,1.000);">0</span>
<div style="left:34px;top:625.1px;width:2px;height:1px;background:#575757;"></div>
<div style="left:33px;top:632.3px;width:3px;height:1px;background:#575757;"></div>
<div style="left:34px;top:639.5px;width:2px;height:1px;background:#575757;"></div>
<div style="left:25px;top:646.7px;width:11px;height:1px;background:#5a5a5a;"></div>
<span style="left:26.6px;top:648.6px;font-size:5.8px;line-height:7px;color:#a4a4a4;transform:scale(1.116,1.000);">3</span>
<span style="left:26.6px;top:655.2px;font-size:5.8px;line-height:7px;color:#a4a4a4;transform:scale(1.116,1.000);">2</span>
<span style="left:26.6px;top:661.8px;font-size:5.8px;line-height:7px;color:#a4a4a4;transform:scale(1.116,1.000);">0</span>
<span style="left:26.6px;top:668.4px;font-size:5.8px;line-height:7px;color:#a4a4a4;transform:scale(1.116,1.000);">0</span>
<div style="left:34px;top:653.9px;width:2px;height:1px;background:#575757;"></div>
<div style="left:33px;top:661.0px;width:3px;height:1px;background:#575757;"></div>
<div style="left:34px;top:668.2px;width:2px;height:1px;background:#575757;"></div>
<div style="left:25px;top:675.4px;width:11px;height:1px;background:#5a5a5a;"></div>
<span style="left:26.6px;top:677.3px;font-size:5.8px;line-height:7px;color:#a4a4a4;transform:scale(1.116,1.000);">3</span>
<span style="left:26.6px;top:683.9px;font-size:5.8px;line-height:7px;color:#a4a4a4;transform:scale(1.116,1.000);">4</span>
<span style="left:26.6px;top:690.5px;font-size:5.8px;line-height:7px;color:#a4a4a4;transform:scale(1.116,1.000);">0</span>
<span style="left:26.6px;top:697.1px;font-size:5.8px;line-height:7px;color:#a4a4a4;transform:scale(1.116,1.000);">0</span>
<div style="left:34px;top:682.6px;width:2px;height:1px;background:#575757;"></div>
<div style="left:33px;top:689.8px;width:3px;height:1px;background:#575757;"></div>
<div style="left:34px;top:697.0px;width:2px;height:1px;background:#575757;"></div>
<div style="left:25px;top:704.1px;width:11px;height:1px;background:#5a5a5a;"></div>
<div style="left:323px;top:72px;width:1.1px;height:639px;background:#49b0aa;"></div>
<div style="left:572.25px;top:72px;width:1.2px;height:639px;background:#49b0aa;"></div>
<div style="left:36px;top:209.9px;width:824px;height:1.1px;background:#49b0aa;"></div>
<div style="left:36px;top:574.1px;width:824px;height:1.1px;background:#49b0aa;"></div>
<div style="left:303.6px;top:187.2px;width:288.9px;height:410.3px;background-color:#fff;background-image:conic-gradient(#c9c9c9 25%,#fff 0 50%,#c9c9c9 0 75%,#fff 0);background-size:10px 11.1px"></div>
<div style="left:323.2px;top:187px;width:1px;height:410px;background:#c4f1ea;"></div>
<div style="left:572.3px;top:187px;width:1px;height:410px;background:#c4f1ea;"></div>
<div style="left:304px;top:210px;width:289px;height:1px;background:#d6f6f2;"></div>
<div style="left:304px;top:573.4px;width:289px;height:1.8px;background:#a9e6ea;"></div>
<div style="left:394px;top:150px;width:292px;height:420px;background:#fff;"></div>
<div style="left:406.5px;top:169px;width:268.7px;height:0;border-top:1px dotted #cdcdcd"></div>
<div style="left:406.5px;top:169px;width:0;height:384.0px;border-left:1px solid #dcdcdc"></div>
<div style="left:675.2px;top:169px;width:0;height:384.0px;border-left:1px solid #dcdcdc"></div>
<span style="left:468.4px;top:172.5px;font-size:14.5px;line-height:17px;color:#2e74b5;font-weight:bold;transform:scale(0.977,1.050);-webkit-text-stroke:0.35px #2e74b5;">PROFORMA INVOICE</span>
<div style="left:406.5px;top:206.4px;width:268.7px;height:0;border-top:1px dotted #cdcdcd"></div>
<div style="left:406.5px;top:218.6px;width:268.7px;height:0;border-top:1px dotted #cdcdcd"></div>
<div style="left:406.5px;top:227.5px;width:268.7px;height:0;border-top:1px dotted #cdcdcd"></div>
<div style="left:406.5px;top:235px;width:268.7px;height:0;border-top:1px dotted #cdcdcd"></div>
<div style="left:406.5px;top:243.2px;width:268.7px;height:0;border-top:1px dotted #cdcdcd"></div>
<div style="left:406.5px;top:250px;width:268.7px;height:0;border-top:1px dotted #cdcdcd"></div>
<div style="left:550.8px;top:206.4px;width:0;height:43.6px;border-left:1px solid #cdcdcd"></div>
<div style="left:631.7px;top:206.4px;width:0;height:43.6px;border-left:1px solid #cdcdcd"></div>
<div style="left:453.3px;top:206.4px;width:0;height:43.6px;border-left:1px dotted #dcdcdc"></div>
<div style="left:482.9px;top:206.4px;width:0;height:43.6px;border-left:1px dotted #dcdcdc"></div>
<div style="left:572px;top:206.4px;width:0;height:43.6px;border-left:1px dotted #dcdcdc"></div>
<div style="left:586px;top:206.4px;width:0;height:43.6px;border-left:1px dotted #dcdcdc"></div>
<span style="left:409.6px;top:206.5px;font-size:6.6px;line-height:8px;color:#2e74b5;transform:scale(0.929,1.000);">Invoice To:</span>
<span style="left:486.7px;top:206.5px;font-size:6.6px;line-height:8px;color:#2e74b5;transform:scale(0.943,1.000);">Deliver To:</span>
<span style="left:409.6px;top:219.6px;font-size:6.6px;line-height:8px;color:#2e2e2e;transform:scale(0.830,1.000);">John Smith</span>
<span style="left:409.6px;top:227.3px;font-size:6.6px;line-height:8px;color:#2e2e2e;transform:scale(0.844,1.000);">122, John Street,</span>
<span style="left:409.6px;top:235.6px;font-size:6.6px;line-height:8px;color:#2e2e2e;transform:scale(0.855,1.000);">City State 002025.</span>
<span style="left:486.7px;top:219.6px;font-size:6.6px;line-height:8px;color:#2e2e2e;transform:scale(0.873,1.000);">Anne Pacher</span>
<span style="left:486.7px;top:227.3px;font-size:6.6px;line-height:8px;color:#2e2e2e;transform:scale(0.887,1.000);">322 Corporate Street,</span>
<span style="left:486.7px;top:235.6px;font-size:6.6px;line-height:8px;color:#2e2e2e;transform:scale(0.860,1.000);">City State, 002335.</span>
<span style="left:590.4px;top:218.7px;font-size:6.4px;line-height:8px;color:#2e2e2e;transform:scale(0.833,1.000);">Invoice Date:</span>
<span style="left:590.4px;top:227.1px;font-size:6.4px;line-height:8px;color:#2e2e2e;transform:scale(0.847,1.000);">Invoice No:</span>
<span style="left:590.4px;top:234.5px;font-size:6.4px;line-height:8px;color:#2e2e2e;transform:scale(0.863,1.000);">Customer Ref:</span>
<div style="left:406.5px;top:256.2px;width:268.70000000000005px;height:18.3px;background:#2e74b5;"></div>
<div style="left:550.5px;top:256.2px;width:1px;height:18.3px;background:#e6eef7;"></div>
<div style="left:585.4px;top:256.2px;width:1px;height:18.3px;background:#5d95ca;"></div>
<div style="left:629.2px;top:256.2px;width:1px;height:18.3px;background:#e6eef7;"></div>
<span style="left:409.6px;top:261.1px;font-size:7.4px;line-height:9px;color:#fff;transform:scale(0.963,1.000);-webkit-text-stroke:0.25px #fff;">Full Description Of Goods</span>
<span style="left:561.4px;top:257.6px;font-size:7px;line-height:8px;color:#fff;transform:scale(1.068,1.000);-webkit-text-stroke:0.25px #fff;">Unit</span>
<span style="left:560.6px;top:265.8px;font-size:7px;line-height:8px;color:#fff;transform:scale(0.953,1.000);-webkit-text-stroke:0.25px #fff;">Price</span>
<span style="left:600.6px;top:261.1px;font-size:7.4px;line-height:9px;color:#fff;transform:scale(0.920,1.000);-webkit-text-stroke:0.25px #fff;">QTY</span>
<span style="left:645px;top:261.1px;font-size:7.4px;line-height:9px;color:#fff;transform:scale(0.992,1.000);-webkit-text-stroke:0.25px #fff;">Total</span>
<div style="left:406.5px;top:287.3px;width:268.7px;height:0;border-top:1px solid #e1e9f0"></div>
<div style="left:406.5px;top:300.7px;width:268.7px;height:0;border-top:1px solid #e1e9f0"></div>
<div style="left:406.5px;top:314.0px;width:268.7px;height:0;border-top:1px solid #e1e9f0"></div>
<div style="left:406.5px;top:327.4px;width:268.7px;height:0;border-top:1px solid #e1e9f0"></div>
<div style="left:406.5px;top:340.8px;width:268.7px;height:0;border-top:1px solid #e1e9f0"></div>
<div style="left:406.5px;top:354.1px;width:268.7px;height:0;border-top:1px solid #e1e9f0"></div>
<div style="left:406.5px;top:367.5px;width:268.7px;height:0;border-top:1px solid #e1e9f0"></div>
<div style="left:406.5px;top:380.9px;width:268.7px;height:0;border-top:1px solid #e1e9f0"></div>
<div style="left:550.8px;top:275.5px;width:0;height:157.5px;border-left:1px solid #d9d9d9"></div>
<div style="left:585.4px;top:275.5px;width:0;height:105.5px;border-left:1px solid #d9d9d9"></div>
<div style="left:629px;top:275.5px;width:0;height:157.5px;border-left:1px solid #d9d9d9"></div>
<div style="left:550.8px;top:393.5px;width:124.4px;height:0;border-top:1px solid #dedede"></div>
<div style="left:550.8px;top:406.8px;width:124.4px;height:0;border-top:1px solid #dedede"></div>
<div style="left:550.8px;top:420px;width:124.4px;height:0;border-top:1px solid #dedede"></div>
<div style="left:550.8px;top:433px;width:124.4px;height:0;border-top:1px solid #dedede"></div>
<div style="left:429px;top:381px;width:0;height:52.0px;border-left:1px solid #e0e0e0"></div>
<div style="left:453.7px;top:381px;width:0;height:52.0px;border-left:1px solid #e0e0e0"></div>
<div style="left:483.2px;top:381px;width:0;height:52.0px;border-left:1px solid #e0e0e0"></div>
<span style="left:593.7px;top:383.5px;font-size:6.4px;line-height:8px;color:#2e2e2e;transform:scale(0.955,1.000);">SUB TOTAL</span>
<span style="left:587.3px;top:395.8px;font-size:6.4px;line-height:8px;color:#2e2e2e;transform:scale(0.982,1.000);">TOTAL VAT %</span>
<span style="left:602px;top:409.3px;font-size:6.4px;line-height:8px;color:#2e2e2e;transform:scale(1.076,1.000);">VAT NO</span>
<span style="left:576.6px;top:422.5px;font-size:7.4px;line-height:9px;color:#2e2e2e;transform:scale(0.973,1.000);">GRAND TOTAL</span>
<div style="left:406.5px;top:432.8px;width:268.7px;height:0;border-top:1px dotted #cdcdcd"></div>
<div style="left:406.5px;top:440.8px;width:268.7px;height:0;border-top:1px dotted #cdcdcd"></div>
<div style="left:406.5px;top:447.5px;width:268.7px;height:0;border-top:1px dotted #cdcdcd"></div>
<div style="left:406.5px;top:457px;width:268.7px;height:0;border-top:1px dotted #cdcdcd"></div>
<div style="left:406.5px;top:464.2px;width:268.7px;height:0;border-top:1px dotted #cdcdcd"></div>
<div style="left:429px;top:440.8px;width:0;height:6.7px;border-left:1px dotted #dcdcdc"></div>
<div style="left:429px;top:457px;width:0;height:7.2px;border-left:1px dotted #dcdcdc"></div>
<div style="left:453.7px;top:440.8px;width:0;height:6.7px;border-left:1px dotted #dcdcdc"></div>
<div style="left:453.7px;top:457px;width:0;height:7.2px;border-left:1px dotted #dcdcdc"></div>
<div style="left:483.2px;top:440.8px;width:0;height:6.7px;border-left:1px dotted #dcdcdc"></div>
<div style="left:483.2px;top:457px;width:0;height:7.2px;border-left:1px dotted #dcdcdc"></div>
<div style="left:550.8px;top:440.8px;width:0;height:6.7px;border-left:1px dotted #dcdcdc"></div>
<div style="left:550.8px;top:457px;width:0;height:7.2px;border-left:1px dotted #dcdcdc"></div>
<div style="left:631.7px;top:440.8px;width:0;height:6.7px;border-left:1px dotted #dcdcdc"></div>
<div style="left:631.7px;top:457px;width:0;height:7.2px;border-left:1px dotted #dcdcdc"></div>
<div style="left:554.4px;top:447.5px;width:0;height:9.5px;border-left:1px solid #cdcdcd"></div>
<div style="left:629.6px;top:447.5px;width:0;height:9.5px;border-left:1px solid #cdcdcd"></div>
<span style="left:409.6px;top:448.3px;font-size:7.2px;line-height:9px;color:#2e2e2e;transform:scale(1.006,1.000);">Country Of  Origin:</span>
<span style="left:415.6px;top:464.4px;font-size:6.6px;line-height:8px;color:#3a3a3a;transform:scale(0.937,1.000);">We declare that the above information is true and correct to the best of our knowledge.</span>
<span style="left:415.6px;top:473.6px;font-size:6.6px;line-height:8px;color:#3a3a3a;transform:scale(0.916,1.000);">For and on behalf of the above named company.</span>
<div style="left:406.5px;top:507.6px;width:268.7px;height:0;border-top:1px dotted #cdcdcd"></div>
<div style="left:406.5px;top:514.8px;width:268.7px;height:0;border-top:1px dotted #cdcdcd"></div>
<div style="left:406.5px;top:524.3px;width:268.7px;height:0;border-top:1px dotted #cdcdcd"></div>
<div style="left:406.5px;top:533.7px;width:268.7px;height:0;border-top:1px dotted #cdcdcd"></div>
<div style="left:406.5px;top:543.4px;width:268.7px;height:0;border-top:1px dotted #cdcdcd"></div>
<div style="left:406.5px;top:553px;width:268.7px;height:0;border-top:1px solid #dcdcdc"></div>
<div style="left:429px;top:507.4px;width:0;height:45.6px;border-left:1px dotted #dcdcdc"></div>
<div style="left:453.3px;top:507.4px;width:0;height:45.6px;border-left:1px dotted #dcdcdc"></div>
<div style="left:482.9px;top:507.4px;width:0;height:45.6px;border-left:1px dotted #dcdcdc"></div>
<div style="left:585.4px;top:507.4px;width:0;height:45.6px;border-left:1px dotted #dcdcdc"></div>
<div style="left:550.8px;top:507.4px;width:0;height:45.6px;border-left:1px solid #cdcdcd"></div>
<div style="left:631.7px;top:507.4px;width:0;height:45.6px;border-left:1px solid #cdcdcd"></div>
<span style="left:416px;top:516.5px;font-size:6.6px;line-height:8px;color:#2e2e2e;transform:scale(1.064,1.000);">Signature:</span>
<span style="left:560.3px;top:516.5px;font-size:6.6px;line-height:8px;color:#2e2e2e;transform:scale(1.019,1.000);">Stamp:</span>
<span style="left:416px;top:544.9px;font-size:6.6px;line-height:8px;color:#2e2e2e;transform:scale(1.080,1.000);">Name:</span>
<span style="left:560.3px;top:544.9px;font-size:6.6px;line-height:8px;color:#2e2e2e;transform:scale(1.059,1.000);">Date:</span>
<div style="left:0px;top:41px;width:25px;height:670px;background:#535353;"></div>
<div style="left:0px;top:41px;width:1px;height:679px;background:#3c3c3c;"></div>
<div style="left:0px;top:41px;width:25px;height:7.6px;background:#434343;"></div>
<div style="left:24.2px;top:41px;width:1.3px;height:670px;background:#444;"></div>
<svg style="left:2.8px;top:42.3px;" width="5.4" height="5" viewBox="0 0 5.4 5"><path d="M0.3 0.2L2.5 2.5L0.3 4.8Z M2.9 0.2L5.1 2.5L2.9 4.8Z" fill="#d8d8d8"/></svg>
<div style="left:4px;top:52.5px;width:16.5px;height:1px;background:#484848;"></div>
<div style="left:4px;top:55px;width:16.5px;height:1px;background:#484848;"></div>
<div style="left:4px;top:57.5px;width:16.5px;height:1px;background:#484848;"></div>
<div style="left:3.2px;top:61.7px;width:19px;height:16.2px;background:#2e2e2e;"></div>
<svg style="left:6.550000000000001px;top:63.5px;overflow:visible;" width="11.5" height="12.1" viewBox="0 0 14 14"><path d="M7 1.500V12.500M1.500 7H12.500" stroke="#e4e4e4" stroke-width="1.200"/><path d="M7 0L9 2.600H5Z M7 14L9 11.400H5Z M0 7L2.600 5V9Z M14 7L11.400 5V9Z" fill="#e4e4e4"/></svg>
<svg style="left:19.5px;top:74.0px;" width="2.5" height="2.5" viewBox="0 0 2.5 2.5"><path d="M2.5 0V2.5H0Z" fill="#b0b0b0"/></svg>
<svg style="left:6.550000000000001px;top:81.5px;overflow:visible;" width="11.5" height="12.1" viewBox="0 0 14 14"><rect x="1.500" y="2.500" width="11" height="9" fill="none" stroke="#e4e4e4" stroke-width="1.200" stroke-dasharray="2.200 1.400"/></svg>
<svg style="left:19.5px;top:92.0px;" width="2.5" height="2.5" viewBox="0 0 2.5 2.5"><path d="M2.5 0V2.5H0Z" fill="#b0b0b0"/></svg>
<svg style="left:6.550000000000001px;top:99.5px;overflow:visible;" width="11.5" height="12.1" viewBox="0 0 14 14"><path d="M2 3L6 6.500L12 2.500L10.500 8.500L4.500 9.500Z" fill="none" stroke="#e4e4e4" stroke-width="1.200" stroke-linejoin="round"/><path d="M4.500 9.500L2.500 13" stroke="#e4e4e4" stroke-width="1.200"/></svg>
<svg style="left:19.5px;top:110.0px;" width="2.5" height="2.5" viewBox="0 0 2.5 2.5"><path d="M2.5 0V2.5H0Z" fill="#b0b0b0"/></svg>
<svg style="left:6.550000000000001px;top:117.8px;overflow:visible;" width="11.5" height="12.1" viewBox="0 0 14 14"><path d="M2 2H8V4H4V8H2Z" fill="#e4e4e4"/><path d="M6.500 6L12.500 8.500L10 9.500L12 12L11 12.800L9 10.300L7.500 12Z" fill="#e4e4e4"/></svg>
<svg style="left:19.5px;top:128.3px;" width="2.5" height="2.5" viewBox="0 0 2.5 2.5"><path d="M2.5 0V2.5H0Z" fill="#b0b0b0"/></svg>
<svg style="left:6.550000000000001px;top:136.0px;overflow:visible;" width="11.5" height="12.1" viewBox="0 0 14 14"><path d="M3.500 0.500V10.500H13.500M0.500 3.500H10.500V13.500" fill="none" stroke="#e4e4e4" stroke-width="1.400"/></svg>
<svg style="left:19.5px;top:146.5px;" width="2.5" height="2.5" viewBox="0 0 2.5 2.5"><path d="M2.5 0V2.5H0Z" fill="#b0b0b0"/></svg>
<svg style="left:6.550000000000001px;top:154.0px;overflow:visible;" width="11.5" height="12.1" viewBox="0 0 14 14"><rect x="1.500" y="2" width="11" height="10" fill="none" stroke="#e4e4e4" stroke-width="1.200"/><path d="M1.500 2L12.500 12M12.500 2L1.500 12" stroke="#e4e4e4" stroke-width="1"/></svg>
<svg style="left:6.550000000000001px;top:172.0px;overflow:visible;" width="11.5" height="12.1" viewBox="0 0 14 14"><path d="M2 12L3 9L8.500 3.500L10.500 5.500L5 11Z" fill="none" stroke="#e4e4e4" stroke-width="1.100"/><path d="M8 2.500L9.500 1Q11 -0.200 12.500 1.500Q14 3 12.800 4.500L11.500 6Z" fill="#e4e4e4"/></svg>
<svg style="left:19.5px;top:182.5px;" width="2.5" height="2.5" viewBox="0 0 2.5 2.5"><path d="M2.5 0V2.5H0Z" fill="#b0b0b0"/></svg>
<svg style="left:6.550000000000001px;top:190.0px;overflow:visible;" width="11.5" height="12.1" viewBox="0 0 14 14"><g transform="rotate(-45 7 7)"><rect x="0.500" y="4" width="13" height="6" rx="2.500" fill="#e4e4e4"/><rect x="5" y="4.800" width="4" height="4.400" fill="#535353"/><circle cx="6.200" cy="6.200" r="0.500" fill="#e4e4e4"/><circle cx="7.800" cy="7.800" r="0.500" fill="#e4e4e4"/></g></svg>
<svg style="left:19.5px;top:200.5px;" width="2.5" height="2.5" viewBox="0 0 2.5 2.5"><path d="M2.5 0V2.5H0Z" fill="#b0b0b0"/></svg>
<svg style="left:6.550000000000001px;top:208.0px;overflow:visible;" width="11.5" height="12.1" viewBox="0 0 14 14"><path d="M12.500 1.500L6.500 8" stroke="#e4e4e4" stroke-width="2" stroke-linecap="round"/><path d="M5.800 8C4 8.300 4 10.500 2 12C4.500 12.800 7 11.500 7.300 9.300Z" fill="#e4e4e4"/></svg>
<svg style="left:19.5px;top:218.5px;" width="2.5" height="2.5" viewBox="0 0 2.5 2.5"><path d="M2.5 0V2.5H0Z" fill="#b0b0b0"/></svg>
<svg style="left:6.550000000000001px;top:226.5px;overflow:visible;" width="11.5" height="12.1" viewBox="0 0 14 14"><path d="M5.500 1.500H8.500L8 6H11.500V9H2.500V6H6Z" fill="#e4e4e4"/><rect x="2" y="10.500" width="10" height="1.600" fill="#e4e4e4"/></svg>
<svg style="left:19.5px;top:237.0px;" width="2.5" height="2.5" viewBox="0 0 2.5 2.5"><path d="M2.5 0V2.5H0Z" fill="#b0b0b0"/></svg>
<svg style="left:6.550000000000001px;top:244.5px;overflow:visible;" width="11.5" height="12.1" viewBox="0 0 14 14"><path d="M12.500 1.500L7 7.500" stroke="#e4e4e4" stroke-width="1.800" stroke-linecap="round"/><path d="M6.300 7.600C4.800 8 4.800 10 3 11.200C5.200 12 7.300 10.800 7.600 8.900Z" fill="#e4e4e4"/><path d="M5.500 2.500A3.500 3.500 0 0 0 1.500 6" fill="none" stroke="#e4e4e4" stroke-width="1.100"/><path d="M0 5L1.600 7.500L3.200 5Z" fill="#e4e4e4"/></svg>
<svg style="left:19.5px;top:255.0px;" width="2.5" height="2.5" viewBox="0 0 2.5 2.5"><path d="M2.5 0V2.5H0Z" fill="#b0b0b0"/></svg>
<svg style="left:6.550000000000001px;top:262.8px;overflow:visible;" width="11.5" height="12.1" viewBox="0 0 14 14"><path d="M8.500 1.500L12.500 5.500L7 11H4L2 9Z" fill="#e4e4e4"/><path d="M2 12.500H12" stroke="#e4e4e4" stroke-width="1.100"/><path d="M4.500 6.500L8 10" stroke="#535353" stroke-width="1"/></svg>
<svg style="left:19.5px;top:273.3px;" width="2.5" height="2.5" viewBox="0 0 2.5 2.5"><path d="M2.5 0V2.5H0Z" fill="#b0b0b0"/></svg>
<div style="left:7.3px;top:281.6px;width:10.8px;height:9.8px;background:linear-gradient(90deg,#3a3a3a,#f0f0f0);border:1px solid #e0e0e0;box-sizing:border-box"></div>
<svg style="left:19.5px;top:291.0px;" width="2.5" height="2.5" viewBox="0 0 2.5 2.5"><path d="M2.5 0V2.5H0Z" fill="#b0b0b0"/></svg>
<svg style="left:6.550000000000001px;top:299.0px;overflow:visible;" width="11.5" height="12.1" viewBox="0 0 14 14"><path d="M7 1.500Q11 7 11 9.300A4 4 0 0 1 3 9.300Q3 7 7 1.500Z" fill="#e4e4e4"/></svg>
<svg style="left:19.5px;top:309.5px;" width="2.5" height="2.5" viewBox="0 0 2.5 2.5"><path d="M2.5 0V2.5H0Z" fill="#b0b0b0"/></svg>
<svg style="left:6.550000000000001px;top:316.8px;overflow:visible;" width="11.5" height="12.1" viewBox="0 0 14 14"><circle cx="8.500" cy="5" r="3.600" fill="#e4e4e4"/><path d="M6 7.800L2 12.500" stroke="#e4e4e4" stroke-width="1.800" stroke-linecap="round"/></svg>
<svg style="left:19.5px;top:327.3px;" width="2.5" height="2.5" viewBox="0 0 2.5 2.5"><path d="M2.5 0V2.5H0Z" fill="#b0b0b0"/></svg>
<svg style="left:6.550000000000001px;top:335.0px;overflow:visible;" width="11.5" height="12.1" viewBox="0 0 14 14"><path d="M2 12L3.500 6L8 3L11 6L8 10.500Z" fill="none" stroke="#e4e4e4" stroke-width="1.200" stroke-linejoin="round"/><path d="M2 12L6.500 7.500" stroke="#e4e4e4" stroke-width="1"/><circle cx="6.800" cy="7.200" r="1" fill="#e4e4e4"/><path d="M8.500 2L12 5.500" stroke="#e4e4e4" stroke-width="1.600"/></svg>
<svg style="left:19.5px;top:345.5px;" width="2.5" height="2.5" viewBox="0 0 2.5 2.5"><path d="M2.5 0V2.5H0Z" fill="#b0b0b0"/></svg>
<span style="left:8.6px;top:352.2px;font-size:12px;line-height:14px;color:#e4e4e4;font-weight:bold;font-family:'Liberation Serif',serif;transform:scale(1.051,1.000);">T</span>
<svg style="left:19.5px;top:363.5px;" width="2.5" height="2.5" viewBox="0 0 2.5 2.5"><path d="M2.5 0V2.5H0Z" fill="#b0b0b0"/></svg>
<svg style="left:6.550000000000001px;top:370.5px;overflow:visible;" width="11.5" height="12.1" viewBox="0 0 14 14"><path d="M4 1.500V12L6.800 9.500L8.600 13.200L10.200 12.400L8.400 8.800H12Z" fill="#e4e4e4"/></svg>
<svg style="left:19.5px;top:381.0px;" width="2.5" height="2.5" viewBox="0 0 2.5 2.5"><path d="M2.5 0V2.5H0Z" fill="#b0b0b0"/></svg>
<svg style="left:6.550000000000001px;top:389.0px;overflow:visible;" width="11.5" height="12.1" viewBox="0 0 14 14"><rect x="1.500" y="2.500" width="11" height="9" fill="#6a6a6a" stroke="#cfcfcf" stroke-width="1.200"/></svg>
<svg style="left:19.5px;top:399.5px;" width="2.5" height="2.5" viewBox="0 0 2.5 2.5"><path d="M2.5 0V2.5H0Z" fill="#b0b0b0"/></svg>
<svg style="left:6.550000000000001px;top:406.8px;overflow:visible;" width="11.5" height="12.1" viewBox="0 0 14 14"><path d="M4 13Q2 10 1.500 7.500Q2.500 6.500 3.800 8.500V3Q4.700 2 5.500 3V1.800Q6.500 0.800 7.300 1.800V2.500Q8.300 1.600 9 2.600V4Q10 3.300 10.800 4.300V9Q10.800 11.500 9.500 13Z" fill="#e4e4e4"/></svg>
<svg style="left:19.5px;top:417.3px;" width="2.5" height="2.5" viewBox="0 0 2.5 2.5"><path d="M2.5 0V2.5H0Z" fill="#b0b0b0"/></svg>
<svg style="left:6.550000000000001px;top:425.0px;overflow:visible;" width="11.5" height="12.1" viewBox="0 0 14 14"><circle cx="6" cy="6" r="4" fill="none" stroke="#e4e4e4" stroke-width="1.400"/><path d="M9 9L12.800 12.800" stroke="#e4e4e4" stroke-width="1.800" stroke-linecap="round"/></svg>
<div style="left:7px;top:448.300px;width:2.600px;height:2.600px;border-radius:50%;background:#e4e4e4"></div>
<div style="left:11px;top:448.300px;width:2.600px;height:2.600px;border-radius:50%;background:#e4e4e4"></div>
<div style="left:15px;top:448.300px;width:2.600px;height:2.600px;border-radius:50%;background:#e4e4e4"></div>
<svg style="left:19.5px;top:454.0px;" width="2.5" height="2.5" viewBox="0 0 2.5 2.5"><path d="M2.5 0V2.5H0Z" fill="#b0b0b0"/></svg>
<div style="left:3.5px;top:463px;width:5px;height:5px;background:#111;"></div>
<div style="left:5.500px;top:465px;width:5px;height:5px;background:#fff;border:0.500px solid #222;box-sizing:border-box"></div>
<svg style="left:14px;top:462px;" width="7" height="7" viewBox="0 0 7 7"><path d="M1 2H5V6" fill="none" stroke="#d0d0d0" stroke-width="1"/><path d="M0 2L2 0.500V3.500Z M5 7L3.500 5H6.500Z" fill="#d0d0d0"/></svg>
<div style="left:9.500px;top:481px;width:11.200px;height:12px;background:#fff"></div>
<div style="left:2.6px;top:473.400px;width:12.300px;height:13.2px;background:#fff;border:0.6px solid #4a4a4a;box-sizing:border-box"></div>
<svg style="left:6.5px;top:500px;" width="12" height="11" viewBox="0 0 12 11"><rect x="0.600" y="0.600" width="10.800" height="9.800" fill="none" stroke="#c8c8c8" stroke-width="1.100"/><circle cx="6" cy="5.500" r="2.600" fill="none" stroke="#9a9a9a" stroke-width="0.900" stroke-dasharray="1 1"/></svg>
<svg style="left:6.8px;top:519.6px;" width="11.2" height="10" viewBox="0 0 13 12"><rect x="3.500" y="0.600" width="8.800" height="7" fill="none" stroke="#c8c8c8" stroke-width="1.100"/><rect x="0.600" y="3.600" width="7.500" height="6.500" fill="#535353" stroke="#c8c8c8" stroke-width="1.100"/></svg>
<svg style="left:19.5px;top:529.5px;" width="2.5" height="2.5" viewBox="0 0 2.5 2.5"><path d="M2.5 0V2.5H0Z" fill="#b0b0b0"/></svg>
<div style="left:0px;top:711px;width:859px;height:9px;background:#4f4f4f;"></div>
<span style="left:30.8px;top:713.7px;font-size:7.5px;line-height:9px;color:#f4f4f4;font-weight:bold;transform:scale(0.755,1.000);">20.66%</span>
<span style="left:70.8px;top:713.7px;font-size:7.5px;line-height:9px;color:#e8e8e8;transform:scale(0.816,1.000);">2232 px x 2854 px (250 ppi)</span>
<svg style="left:163.5px;top:715px;" width="4" height="6" viewBox="0 0 4 6"><path d="M0.800 0.800L3.200 3L0.800 5.200" stroke="#d0d0d0" fill="none" stroke-width="0.900"/></svg>
<div style="left:859px;top:41px;width:221px;height:679px;background:#434343;"></div>
<div style="left:859px;top:60px;width:5.5px;height:660px;background:#4a4a4a;"></div>
<div style="left:864.5px;top:60px;width:6px;height:660px;background:#454545;"></div>
<div style="left:870.5px;top:50px;width:25px;height:670px;background:#4e4e4e;"></div>
<div style="left:895.3px;top:50px;width:1.2px;height:670px;background:#444;"></div>
<div style="left:1075px;top:50px;width:5px;height:670px;background:#4a4a4a;"></div>
<div style="left:1074.8px;top:50px;width:1.2px;height:670px;background:#3f3f3f;"></div>
<svg style="left:886px;top:42.3px;" width="5.4" height="5" viewBox="0 0 5.4 5"><path d="M2.5 0.2L0.300 2.500L2.500 4.800Z M5.100 0.200L2.900 2.500L5.100 4.800Z" fill="#d8d8d8"/></svg>
<svg style="left:1066.5px;top:42.3px;" width="5.4" height="5" viewBox="0 0 5.4 5"><path d="M0.3 0.2L2.500 2.500L0.300 4.800Z M2.900 0.200L5.100 2.500L2.900 4.800Z" fill="#d8d8d8"/></svg>
<div style="left:872px;top:50px;width:22px;height:151px;background:#535353;"></div>
<div style="left:872px;top:97px;width:22px;height:1px;background:#444;"></div>
<div style="left:872px;top:143px;width:22px;height:1px;background:#444;"></div>
<div style="left:872px;top:172px;width:22px;height:1px;background:#444;"></div>
<svg style="left:876px;top:57px;" width="14" height="14" viewBox="0 0 14 14"><path d="M1 2.5H5M1 4.5H4M1 6.5H3" stroke="#e2e2e2" stroke-width="1"/><path d="M12.5 1.5L7 8" stroke="#e2e2e2" stroke-width="2.2" stroke-linecap="round"/><path d="M6.5 8.2C5 8.5 4.8 10.5 3.5 11.5C5.5 12 7.5 11 7.8 9.2Z" fill="#e2e2e2"/></svg>
<svg style="left:876px;top:77px;" width="14" height="14" viewBox="0 0 14 14"><path d="M1 4H13M1 10H13" stroke="#e2e2e2" stroke-width="1.2"/><circle cx="4.5" cy="4" r="2.2" fill="#e2e2e2"/><path d="M8 10L11.5 7.2V12.8Z" fill="#e2e2e2"/></svg>
<span style="left:877.5px;top:105.5px;font-size:12px;line-height:14px;color:#e2e2e2;">A</span>
<div style="left:887px;top:107px;width:1px;height:11.5px;background:#e2e2e2;"></div>
<span style="left:878.5px;top:124.0px;font-size:12px;line-height:14px;color:#e2e2e2;font-weight:bold;transform:scale(1.349,1.000);">¶</span>
<span style="left:876.5px;top:151.0px;font-size:14px;line-height:17px;color:#e2e2e2;font-family:'Liberation Serif',serif;transform:scale(1.231,1.000);font-style:italic;">A</span>
<svg style="left:877px;top:185px;" width="10.5" height="11.5" viewBox="0 0 13 14"><path d="M6.5 1L12 4V10L6.5 13L1 10V4Z M1 4L6.5 7L12 4M6.5 7V13" fill="none" stroke="#bdbdbd" stroke-width="1.3"/></svg>
<div style="left:896px;top:49px;width:179px;height:335.5px;background:#535353;"></div>
<div style="left:896px;top:384.5px;width:179px;height:2.2px;background:#3e3e3e;"></div>
<div style="left:896px;top:49px;width:179px;height:19px;background:#434343;"></div>
<div style="left:1009px;top:49px;width:40px;height:20px;background:#535353;"></div>
<span style="left:901.3px;top:53.8px;font-size:7.5px;line-height:9px;color:#bdbdbd;font-weight:bold;transform:scale(0.794,1.000);">Swatc</span>
<span style="left:924.4px;top:53.8px;font-size:7.5px;line-height:9px;color:#bdbdbd;font-weight:bold;transform:scale(0.847,1.000);">Gradi</span>
<span style="left:947px;top:53.8px;font-size:7.5px;line-height:9px;color:#bdbdbd;font-weight:bold;transform:scale(0.800,1.000);">Patter</span>
<span style="left:969px;top:53.8px;font-size:7.5px;line-height:9px;color:#bdbdbd;font-weight:bold;transform:scale(0.808,1.000);">Histor</span>
<span style="left:991.5px;top:53.8px;font-size:7.5px;line-height:9px;color:#bdbdbd;font-weight:bold;transform:scale(0.729,1.000);">Action</span>
<span style="left:1014.4px;top:53.8px;font-size:7.5px;line-height:9px;color:#fff;font-weight:bold;transform:scale(0.825,1.000);">Properties</span>
<div style="left:1065.5px;top:56.0px;width:7px;height:1.2px;background:#c8c8c8;"></div>
<div style="left:1065.5px;top:58.2px;width:7px;height:1.2px;background:#c8c8c8;"></div>
<div style="left:1065.5px;top:60.4px;width:7px;height:1.2px;background:#c8c8c8;"></div>
<div style="left:903px;top:73px;width:13px;height:15px;background:#393939;"></div>
<svg style="left:905px;top:75px;" width="9" height="11" viewBox="0 0 9 11"><path d="M1 0.6H5.6L8.4 3.4V10.4H1Z M5.6 0.6V3.4H8.4" fill="none" stroke="#f0f0f0" stroke-width="1"/></svg>
<span style="left:920.6px;top:77.8px;font-size:7.2px;line-height:9px;color:#dedede;transform:scale(0.859,1.000);">Document</span>
<div style="left:896px;top:92px;width:170px;height:1px;background:#474747;"></div>
<div style="left:1066px;top:92px;width:9px;height:276px;background:#4a4a4a;"></div>
<div style="left:1067.5px;top:104px;width:6px;height:222px;background:#686868;"></div>
<svg style="left:1067.5px;top:96px;" width="6" height="5" viewBox="0 0 6 5"><path d="M0.5 4L3 1.5L5.5 4" stroke="#8a8a8a" fill="none"/></svg>
<svg style="left:1067.5px;top:359px;" width="6" height="5" viewBox="0 0 6 5"><path d="M0.5 1L3 3.5L5.5 1" stroke="#8a8a8a" fill="none"/></svg>
<svg style="left:900.5px;top:100.3px;" width="6" height="4.3" viewBox="0 0 7 5"><path d="M0.6 0.8L3.5 3.8L6.4 0.8" stroke="#a8a8a8" fill="none" stroke-width="1.1"/></svg>
<span style="left:909.8px;top:97.5px;font-size:7.6px;line-height:9px;color:#f4f4f4;font-weight:bold;transform:scale(0.840,1.000);">Canvas</span>
<span style="left:929px;top:116.2px;font-size:7px;line-height:8px;color:#dedede;transform:scale(0.908,1.000);">W</span>
<div style="left:938.5px;top:114.3px;width:31.5px;height:11.5px;background:#454545;border-radius:2px"></div>
<span style="left:941px;top:116.2px;font-size:7px;line-height:8px;color:#f0f0f0;transform:scale(0.843,1.000);">2232 px</span>
<span style="left:980px;top:116.2px;font-size:7px;line-height:8px;color:#dedede;transform:scale(1.071,1.000);">X</span>
<div style="left:990px;top:114.3px;width:31px;height:11.5px;background:#4b4b4b;border-radius:2px"></div>
<span style="left:993px;top:116.2px;font-size:7px;line-height:8px;color:#666;transform:scale(0.831,1.000);">0 px</span>
<span style="left:930px;top:133.3px;font-size:7px;line-height:8px;color:#dedede;transform:scale(0.989,1.000);">H</span>
<div style="left:938.5px;top:131.4px;width:31.5px;height:11.5px;background:#454545;border-radius:2px"></div>
<span style="left:941px;top:133.3px;font-size:7px;line-height:8px;color:#f0f0f0;transform:scale(0.843,1.000);">2854 px</span>
<span style="left:980px;top:133.3px;font-size:7px;line-height:8px;color:#dedede;transform:scale(1.071,1.000);">Y</span>
<div style="left:990px;top:131.4px;width:31px;height:11.5px;background:#4b4b4b;border-radius:2px"></div>
<span style="left:993px;top:133.3px;font-size:7px;line-height:8px;color:#666;transform:scale(0.831,1.000);">0 px</span>
<svg style="left:908px;top:123px;" width="4.8" height="10.6" viewBox="0 0 6 14"><rect x="1" y="0.8" width="4" height="5.2" rx="2" fill="none" stroke="#d8d8d8" stroke-width="1.1"/><rect x="1" y="8" width="4" height="5.2" rx="2" fill="none" stroke="#d8d8d8" stroke-width="1.1"/><path d="M3 4.5V9.5" stroke="#d8d8d8" stroke-width="1.1"/></svg>
<div style="left:939px;top:151px;width:14px;height:17px;background:#383838;"></div>
<svg style="left:942px;top:153px;" width="8" height="13" viewBox="0 0 8 13"><rect x="0.5" y="0.5" width="7" height="12" fill="none" stroke="#e6e6e6"/><circle cx="4" cy="5" r="1.5" fill="#e6e6e6"/><path d="M1.5 11.5V9.5Q4 6.5 6.500 9.5V11.5Z" fill="#e6e6e6"/></svg>
<svg style="left:957px;top:155px;" width="11" height="9" viewBox="0 0 11 9"><rect x="0.5" y="0.5" width="10" height="8" fill="none" stroke="#e0e0e0"/><circle cx="5.500" cy="3.4" r="1.4" fill="#e0e0e0"/><path d="M2.5 8V6.800Q5.500 4.200 8.500 6.800V8Z" fill="#e0e0e0"/></svg>
<span style="left:938.5px;top:176.0px;font-size:6.8px;line-height:8px;color:#dedede;transform:scale(0.909,1.000);">Resolution: 250 pixels/inch</span>
<span style="left:918.3px;top:193.5px;font-size:7px;line-height:8px;color:#dedede;transform:scale(0.897,1.000);">Mode</span>
<div style="left:938px;top:192.3px;width:83px;height:12.2px;background:#454545;border-radius:2px"></div>
<span style="left:943px;top:194.4px;font-size:7px;line-height:8px;color:#f0f0f0;transform:scale(0.827,1.000);">RGB Color</span>
<svg style="left:1012.5px;top:196.8px;" width="6" height="4.3" viewBox="0 0 7 5"><path d="M0.6 0.8L3.5 3.8L6.4 0.8" stroke="#a8a8a8" fill="none" stroke-width="1.1"/></svg>
<div style="left:938px;top:210px;width:83px;height:12.2px;background:#454545;border-radius:2px"></div>
<span style="left:943px;top:212.1px;font-size:7px;line-height:8px;color:#f0f0f0;transform:scale(0.890,1.000);">16 Bits/Channel</span>
<svg style="left:1012.5px;top:214.5px;" width="6" height="4.3" viewBox="0 0 7 5"><path d="M0.6 0.8L3.5 3.8L6.4 0.8" stroke="#a8a8a8" fill="none" stroke-width="1.1"/></svg>
<span style="left:925.5px;top:230.0px;font-size:7px;line-height:8px;color:#dedede;transform:scale(0.951,1.000);">Fill</span>
<div style="left:938px;top:228px;width:12px;height:13px;background:#505050;border:1px solid #626262;box-sizing:border-box"></div>
<div style="left:953px;top:228.6px;width:68px;height:12.2px;background:#454545;border-radius:2px"></div>
<span style="left:957px;top:230.7px;font-size:7px;line-height:8px;color:#f0f0f0;transform:scale(0.934,1.000);">Transparent</span>
<svg style="left:1012.5px;top:233.10000000000002px;" width="6" height="4.3" viewBox="0 0 7 5"><path d="M0.6 0.8L3.5 3.8L6.4 0.8" stroke="#a8a8a8" fill="none" stroke-width="1.1"/></svg>
<div style="left:896px;top:247px;width:170px;height:1px;background:#474747;"></div>
<svg style="left:900.5px;top:255.3px;" width="6" height="4.3" viewBox="0 0 7 5"><path d="M0.6 0.8L3.5 3.8L6.4 0.8" stroke="#a8a8a8" fill="none" stroke-width="1.1"/></svg>
<span style="left:910.5px;top:253.0px;font-size:7.4px;line-height:9px;color:#f4f4f4;font-weight:bold;transform:scale(0.859,1.000);">Rulers &amp; Grids</span>
<div style="left:903px;top:270px;width:15px;height:16px;background:#383838;"></div>
<svg style="left:905px;top:273px;" width="11" height="10" viewBox="0 0 11 10"><path d="M0.5 10V0.5H10.5V3.5H3.5V10Z" fill="#e8e8e8"/></svg>
<svg style="left:925px;top:273px;" width="11" height="11" viewBox="0 0 11 11"><path d="M0.5 0.5H10.5V10.5H0.5Z M4 0.5V10.5M7 0.5V10.5M0.5 4H10.5M0.5 7H10.5" fill="none" stroke="#d8d8d8" stroke-width="0.9"/></svg>
<svg style="left:946px;top:273px;" width="11" height="11" viewBox="0 0 11 11"><rect x="0.8" y="0.8" width="9.400" height="9.400" fill="none" stroke="#d0d0d0" stroke-width="0.9"/><rect x="3" y="3" width="5" height="5" fill="none" stroke="#bcbcbc" stroke-width="0.8" stroke-dasharray="1 1"/></svg>
<div style="left:975px;top:273px;width:46px;height:12.2px;background:#454545;border-radius:2px"></div>
<span style="left:979px;top:275.1px;font-size:7px;line-height:8px;color:#f0f0f0;transform:scale(0.830,1.000);">Pixels</span>
<svg style="left:1012.5px;top:277.3px;" width="6" height="4.3" viewBox="0 0 7 5"><path d="M0.6 0.8L3.5 3.8L6.4 0.8" stroke="#a8a8a8" fill="none" stroke-width="1.1"/></svg>
<div style="left:896px;top:294px;width:170px;height:1px;background:#474747;"></div>
<svg style="left:900.5px;top:302.8px;" width="6" height="4.3" viewBox="0 0 7 5"><path d="M0.6 0.8L3.5 3.8L6.4 0.8" stroke="#a8a8a8" fill="none" stroke-width="1.1"/></svg>
<span style="left:910.5px;top:300.5px;font-size:7.4px;line-height:9px;color:#f4f4f4;font-weight:bold;transform:scale(0.837,1.000);">Guides</span>
<div style="left:903px;top:317px;width:15px;height:17px;background:#383838;"></div>
<svg style="left:905px;top:320px;" width="11" height="12" viewBox="0 0 11 12"><path d="M3 0V12M0 3.5H11M0 8.500H11" stroke="#e4e4e4" stroke-width="1" fill="none"/></svg>
<svg style="left:925px;top:320px;" width="12" height="12" viewBox="0 0 12 12"><path d="M3 0V12M6 0V8M0 3.500H11" stroke="#d4d4d4" stroke-width="1" fill="none"/><rect x="7" y="7.500" width="4.500" height="4" fill="#d4d4d4"/></svg>
<div style="left:944px;top:317px;width:15px;height:17px;background:#383838;"></div>
<svg style="left:946px;top:320px;" width="12" height="12" viewBox="0 0 12 12"><path d="M3.500 0V12M0 3.500H11M7.500 3.500V9" stroke="#e4e4e4" stroke-width="1" fill="none"/><path d="M9 5.500H11V10.500H9Z" fill="#e4e4e4"/></svg>
<div style="left:975px;top:320px;width:46px;height:12.2px;background:#454545;border-radius:2px"></div>
<div style="left:980px;top:325.4px;width:26px;height:1.6px;background:#d8d8d8;"></div>
<svg style="left:1012.5px;top:324.5px;" width="6" height="4.3" viewBox="0 0 7 5"><path d="M0.6 0.8L3.5 3.8L6.4 0.8" stroke="#a8a8a8" fill="none" stroke-width="1.1"/></svg>
<div style="left:896px;top:341px;width:170px;height:1px;background:#474747;"></div>
<svg style="left:900.5px;top:350.3px;" width="6" height="4.3" viewBox="0 0 7 5"><path d="M0.6 0.8L3.5 3.8L6.4 0.8" stroke="#a8a8a8" fill="none" stroke-width="1.1"/></svg>
<span style="left:910.5px;top:347.8px;font-size:7.4px;line-height:9px;color:#f4f4f4;font-weight:bold;transform:scale(0.859,1.000);">Quick Actions</span>
<div style="left:896px;top:386px;width:179px;height:334px;background:#535353;"></div>
<div style="left:896px;top:386px;width:179px;height:20px;background:#434343;"></div>
<div style="left:896px;top:386px;width:30px;height:21px;background:#535353;"></div>
<span style="left:901.3px;top:391.8px;font-size:7.5px;line-height:9px;color:#fff;font-weight:bold;transform:scale(0.794,1.000);">Layers</span>
<div style="left:1066px;top:394.0px;width:6.5px;height:1.2px;background:#c8c8c8;"></div>
<div style="left:1066px;top:396.2px;width:6.5px;height:1.2px;background:#c8c8c8;"></div>
<div style="left:1066px;top:398.4px;width:6.5px;height:1.2px;background:#c8c8c8;"></div>
<div style="left:899.5px;top:413px;width:52.5px;height:13px;background:#414141;border-radius:2px"></div>
<svg style="left:902.5px;top:416.5px;" width="8" height="8" viewBox="0 0 8 8"><circle cx="3.2" cy="3.2" r="2.3" fill="none" stroke="#e6e6e6" stroke-width="1.2"/><path d="M5 5L7.4 7.4" stroke="#e6e6e6" stroke-width="1.3"/></svg>
<span style="left:912.5px;top:416.0px;font-size:7px;line-height:8px;color:#f0f0f0;font-weight:bold;transform:scale(0.804,1.000);">Kind</span>
<svg style="left:944.5px;top:418px;" width="7" height="5" viewBox="0 0 7 5"><path d="M0.6 0.8L3.5 3.8L6.4 0.8" stroke="#a8a8a8" fill="none" stroke-width="1"/></svg>
<svg style="left:959px;top:416px;" width="10" height="8" viewBox="0 0 10 8"><rect x="0.5" y="0.5" width="9" height="7" fill="none" stroke="#dcdcdc"/><path d="M1.5 6.500L4 3.500L5.800 5.500L7 4.500L8.500 6.500Z" fill="#dcdcdc"/></svg>
<svg style="left:974.5px;top:415.5px;" width="9" height="9" viewBox="0 0 9 9"><circle cx="4.500" cy="4.500" r="3.800" fill="none" stroke="#dcdcdc"/><path d="M4.500 0.700A3.800 3.800 0 0 1 4.500 8.300Z" fill="#dcdcdc" transform="rotate(45 4.500 4.500)"/></svg>
<span style="left:990px;top:414.0px;font-size:10px;line-height:12px;color:#dcdcdc;font-weight:bold;font-family:'Liberation Serif',serif;transform:scale(1.228,1.000);">T</span>
<svg style="left:1004px;top:415.5px;" width="10" height="9" viewBox="0 0 10 9"><rect x="1.500" y="1.500" width="7" height="6" fill="none" stroke="#dcdcdc"/><path d="M0 0H3V3H0Z M7 0H10V3H7Z M0 6H3V9H0Z M7 6H10V9H7Z" fill="#dcdcdc"/></svg>
<svg style="left:1019.5px;top:415px;" width="9" height="10" viewBox="0 0 9 10"><path d="M0.500 9.500V3L3 0.500H6.500V9.500Z" fill="#dcdcdc"/><rect x="5" y="5.500" width="3.800" height="3.800" fill="#dcdcdc" stroke="#535353" stroke-width="0.800"/></svg>
<div style="left:1035px;top:414px;width:6px;height:6px;border-radius:50%;background:#ececec"></div>
<div style="left:1037.5px;top:420px;width:1px;height:5px;background:#3c3c3c;"></div>
<div style="left:896px;top:430px;width:170px;height:1px;background:#4a4a4a;"></div>
<div style="left:899.5px;top:434px;width:78px;height:11px;background:#4d4d4d;border-radius:2px"></div>
<span style="left:903px;top:435.5px;font-size:6.8px;line-height:8px;color:#717171;transform:scale(0.913,1.000);">Normal</span>
<svg style="left:969px;top:437.5px;" width="7" height="5" viewBox="0 0 7 5"><path d="M0.6 0.8L3.5 3.8L6.4 0.8" stroke="#6c6c6c" fill="none" stroke-width="1"/></svg>
<span style="left:983px;top:435.5px;font-size:6.8px;line-height:8px;color:#7a7a7a;transform:scale(0.882,1.000);">Opacity:</span>
<div style="left:1009.3px;top:434px;width:21px;height:11px;background:#4b4b4b;border-radius:2px"></div>
<span style="left:1011.5px;top:435.5px;font-size:6.5px;line-height:8px;color:#6a6a6a;transform:scale(0.932,1.000);">100%</span>
<div style="left:1032.5px;top:434px;width:6px;height:11px;background:#4b4b4b;border-radius:2px"></div>
<span style="left:900px;top:454.5px;font-size:6.8px;line-height:8px;color:#8a8a8a;transform:scale(0.849,1.000);">Lock:</span>
<svg style="left:920px;top:454.5px;" width="8" height="8" viewBox="0 0 8 8"><path d="M0 0H4V4H0Z M4 4H8V8H4Z" fill="#b8b8b8"/><rect x="0.400" y="0.400" width="7.200" height="7.200" fill="none" stroke="#b8b8b8" stroke-width="0.800"/></svg>
<svg style="left:934px;top:454px;" width="9" height="9" viewBox="0 0 9 9"><path d="M8 0.800L3.500 5.800" stroke="#b8b8b8" stroke-width="1.800" stroke-linecap="round"/><path d="M3 5.800C1.800 6.200 2 7.600 0.800 8.400C2.600 8.800 4.200 7.800 4.200 6.600Z" fill="#b8b8b8"/></svg>
<svg style="left:947px;top:454.3px;" width="8.6" height="8.6" viewBox="0 0 10 10"><path d="M5 0.500V9.500M0.500 5H9.500" stroke="#b8b8b8" stroke-width="1"/><path d="M5 0L6.500 2H3.500Z M5 10L6.500 8H3.500Z M0 5L2 3.500V6.500Z M10 5L8 3.500V6.500Z" fill="#b8b8b8"/></svg>
<svg style="left:961px;top:455px;" width="8.5" height="7.6" viewBox="0 0 10 9"><path d="M1.500 0V8.500M0 7H9.500M3 2H7.500L8.500 3V7" fill="none" stroke="#b8b8b8" stroke-width="1"/></svg>
<svg style="left:976px;top:454px;" width="7" height="8.8" viewBox="0 0 8 10"><rect x="0.500" y="4.200" width="7" height="5.300" rx="0.800" fill="#b8b8b8"/><path d="M2 4.200V2.800A2 2 0 0 1 6 2.800V4.200" fill="none" stroke="#b8b8b8" stroke-width="1.100"/></svg>
<span style="left:997px;top:454.5px;font-size:6.8px;line-height:8px;color:#7a7a7a;transform:scale(0.804,1.000);">Fill:</span>
<div style="left:1009.3px;top:453px;width:21px;height:11px;background:#4b4b4b;border-radius:2px"></div>
<span style="left:1011.5px;top:454.5px;font-size:6.5px;line-height:8px;color:#6a6a6a;transform:scale(0.932,1.000);">100%</span>
<div style="left:1032.5px;top:453px;width:6px;height:11px;background:#4b4b4b;border-radius:2px"></div>
<div style="left:896px;top:467px;width:170px;height:1px;background:#4a4a4a;"></div>
<div style="left:1066px;top:468px;width:9px;height:238px;background:#4a4a4a;"></div>
<div style="left:1067.5px;top:489px;width:6px;height:65px;background:#686868;"></div>
<svg style="left:1067.5px;top:474px;" width="6" height="5" viewBox="0 0 6 5"><path d="M0.500 4L3 1.500L5.500 4" stroke="#8a8a8a" fill="none"/></svg>
<div style="left:916px;top:468px;width:1px;height:236px;background:#4f4f4f;"></div>
<div style="left:896px;top:572.5px;width:170px;height:1px;background:#4a4a4a;"></div>
<div style="left:896px;top:601.0px;width:170px;height:1px;background:#4a4a4a;"></div>
<div style="left:896px;top:629.2px;width:170px;height:1px;background:#4a4a4a;"></div>
<div style="left:896px;top:658.5px;width:170px;height:1px;background:#4a4a4a;"></div>
<div style="left:896px;top:686.7px;width:170px;height:1px;background:#4a4a4a;"></div>
<span style="left:852.9px;top:657.8px;font-size:41.8px;line-height:50px;color:#262626;font-family:'DejaVu Sans','Liberation Sans',sans-serif;font-weight:200;letter-spacing:-4px;-webkit-text-stroke:0.8px #262626;transform:scaleX(0.926)">EKOGEA.</span>
<span style="left:997.9px;top:657.8px;font-size:41.8px;line-height:50px;color:#7a9e1c;font-family:'DejaVu Sans','Liberation Sans',sans-serif;font-weight:200;letter-spacing:-4px;-webkit-text-stroke:1.4px #7a9e1c;transform:scaleX(0.843)">ORG</span>
<svg style="left:900.5px;top:475.3px;" width="11" height="7" viewBox="0 0 11 7"><path d="M0.500 3.500Q5.500 -1.800 10.500 3.500Q5.500 8.800 0.500 3.500Z" fill="#9a9a9a"/><circle cx="5.500" cy="3.500" r="1.700" fill="#535353"/><circle cx="5.500" cy="3.500" r="0.700" fill="#9a9a9a"/></svg>
<svg style="left:926.5px;top:476.5px;" width="7" height="5" viewBox="0 0 7 5"><path d="M0.6 0.8L3.5 3.8L6.4 0.8" stroke="#c0c0c0" fill="none" stroke-width="1"/></svg>
<svg style="left:934.5px;top:474px;" width="10" height="9" viewBox="0 0 10 9"><path d="M0.500 8.500V0.800H3.800L4.800 2.200H9.500V8.500Z" fill="#e6e6e6"/><path d="M0.500 3.600H9.500" stroke="#535353" stroke-width="0.700"/></svg>
<span style="left:951.3px;top:474.8px;font-size:7px;line-height:8px;color:#f0f0f0;font-weight:bold;transform:scale(0.814,1.000);">edite text</span>
<div style="left:917px;top:486.5px;width:149px;height:1px;background:#4a4a4a;"></div>
<svg style="left:900.5px;top:497.8px;" width="11" height="7" viewBox="0 0 11 7"><path d="M0.500 3.500Q5.500 -1.800 10.500 3.500Q5.500 8.800 0.500 3.500Z" fill="#9a9a9a"/><circle cx="5.500" cy="3.500" r="1.700" fill="#535353"/><circle cx="5.500" cy="3.500" r="0.700" fill="#9a9a9a"/></svg>
<span style="left:943px;top:492.9px;font-size:14.6px;line-height:18px;color:#eeeeee;font-family:'Liberation Serif',serif;transform:scale(0.953,1.000);">T</span>
<span style="left:963px;top:498.0px;font-size:7px;line-height:8px;color:#dedede;transform:scale(0.857,1.000);">Layer 2</span>
<div style="left:896px;top:515px;width:170px;height:1px;background:#4a4a4a;"></div>
<svg style="left:900.5px;top:526.5px;" width="11" height="7" viewBox="0 0 11 7"><path d="M0.500 3.500Q5.500 -1.800 10.500 3.500Q5.500 8.800 0.500 3.500Z" fill="#9a9a9a"/><circle cx="5.500" cy="3.500" r="1.700" fill="#535353"/><circle cx="5.500" cy="3.500" r="0.700" fill="#9a9a9a"/></svg>
<div style="left:938px;top:519.300px;width:15.300px;height:20.700px;background-color:#fff;background-image:conic-gradient(#d4d4d4 25%,#fff 0 50%,#d4d4d4 0 75%,#fff 0);background-size:4px 4px;box-shadow:0 0 0 0.500px #777"></div>
<div style="left:940px;top:522px;width:2px;height:3px;background:#b03a2e;"></div>
<span style="left:959.5px;top:526.5px;font-size:7px;line-height:8px;color:#dedede;transform:scale(0.857,1.000);">Layer 3</span>
<div style="left:896px;top:544.3px;width:170px;height:1px;background:#4a4a4a;"></div>
<svg style="left:900.5px;top:554.8px;" width="11" height="7" viewBox="0 0 11 7"><path d="M0.500 3.500Q5.500 -1.800 10.500 3.500Q5.500 8.800 0.500 3.500Z" fill="#9a9a9a"/><circle cx="5.500" cy="3.500" r="1.700" fill="#535353"/><circle cx="5.500" cy="3.500" r="0.700" fill="#9a9a9a"/></svg>
<span style="left:943px;top:549.9px;font-size:14.6px;line-height:18px;color:#eeeeee;font-family:'Liberation Serif',serif;transform:scale(0.953,1.000);">T</span>
<span style="left:963px;top:555.0px;font-size:6.6px;line-height:8px;color:#dedede;transform:scale(0.984,1.000);">citta0000000...&lt;&lt;&lt;&lt;&lt;&lt;&lt;&lt;0 d</span>
<div style="left:901px;top:581.3px;width:10px;height:10px;border:1px solid #595959;box-sizing:border-box"></div>
<span style="left:943px;top:578.4px;font-size:14.6px;line-height:18px;color:#eeeeee;font-family:'Liberation Serif',serif;transform:scale(0.953,1.000);">T</span>
<span style="left:963px;top:583.5px;font-size:6.6px;line-height:8px;color:#dedede;transform:scale(0.863,1.000);">1aa</span>
<svg style="left:900.5px;top:611.5px;" width="11" height="7" viewBox="0 0 11 7"><path d="M0.500 3.500Q5.500 -1.800 10.500 3.500Q5.500 8.800 0.500 3.500Z" fill="#9a9a9a"/><circle cx="5.500" cy="3.500" r="1.700" fill="#535353"/><circle cx="5.500" cy="3.500" r="0.700" fill="#9a9a9a"/></svg>
<span style="left:943px;top:606.6px;font-size:14.6px;line-height:18px;color:#eeeeee;font-family:'Liberation Serif',serif;transform:scale(0.953,1.000);">T</span>
<span style="left:963px;top:611.7px;font-size:6.6px;line-height:8px;color:#dedede;transform:scale(0.863,1.000);">169</span>
<svg style="left:900.5px;top:640.8px;" width="11" height="7" viewBox="0 0 11 7"><path d="M0.500 3.500Q5.500 -1.800 10.500 3.500Q5.500 8.800 0.500 3.500Z" fill="#9a9a9a"/><circle cx="5.500" cy="3.500" r="1.700" fill="#535353"/><circle cx="5.500" cy="3.500" r="0.700" fill="#9a9a9a"/></svg>
<span style="left:943px;top:635.9px;font-size:14.6px;line-height:18px;color:#eeeeee;font-family:'Liberation Serif',serif;transform:scale(0.953,1.000);">T</span>
<span style="left:963px;top:641.0px;font-size:6.6px;line-height:8px;color:#dedede;transform:scale(0.909,1.000);">m</span>
<svg style="left:900.5px;top:669.0px;" width="11" height="7" viewBox="0 0 11 7"><path d="M0.500 3.500Q5.500 -1.800 10.500 3.500Q5.500 8.800 0.500 3.500Z" fill="#9a9a9a"/><circle cx="5.500" cy="3.500" r="1.700" fill="#535353"/><circle cx="5.500" cy="3.500" r="0.700" fill="#9a9a9a"/></svg>
<span style="left:943px;top:664.1px;font-size:14.6px;line-height:18px;color:#eeeeee;font-family:'Liberation Serif',serif;transform:scale(0.953,1.000);">T</span>
<span style="left:963px;top:669.2px;font-size:6.6px;line-height:8px;color:#dedede;transform:scale(1.029,1.000);">129 cs</span>
<svg style="left:900.5px;top:697.3px;" width="11" height="7" viewBox="0 0 11 7"><path d="M0.500 3.500Q5.500 -1.800 10.500 3.500Q5.500 8.800 0.500 3.500Z" fill="#9a9a9a"/><circle cx="5.500" cy="3.500" r="1.700" fill="#535353"/><circle cx="5.500" cy="3.500" r="0.700" fill="#9a9a9a"/></svg>
<span style="left:943px;top:692.4px;font-size:14.6px;line-height:18px;color:#eeeeee;font-family:'Liberation Serif',serif;transform:scale(0.953,1.000);">T</span>
<span style="left:963px;top:697.5px;font-size:6.6px;line-height:8px;color:#dedede;transform:scale(0.872,1.000);">01.01.1990</span>
<div style="left:896px;top:704.6px;width:179px;height:15.4px;background:#535353;"></div>
<div style="left:896px;top:704.6px;width:179px;height:1px;background:#484848;"></div>
<svg style="left:947px;top:710.5px;" width="11" height="7" viewBox="0 0 11 7"><rect x="0.600" y="1.200" width="5.500" height="4.500" rx="2.200" fill="none" stroke="#8c8c8c" stroke-width="1.100"/><rect x="4.900" y="1.200" width="5.500" height="4.500" rx="2.200" fill="none" stroke="#8c8c8c" stroke-width="1.100"/></svg>
<span style="left:966px;top:708.5px;font-size:8px;line-height:10px;color:#a6a6a6;transform:scale(1.286,1.000);font-style:italic;">fx</span>
<svg style="left:981px;top:709.5px;" width="10" height="8" viewBox="0 0 10 8"><rect x="0" y="0" width="10" height="8" fill="#cfcfcf"/><circle cx="5" cy="4" r="2.500" fill="#535353"/></svg>
<svg style="left:999px;top:709px;" width="10" height="10" viewBox="0 0 10 10"><circle cx="4.500" cy="4.500" r="3.800" fill="none" stroke="#cfcfcf" stroke-width="1.100"/><path d="M4.500 0.700A3.800 3.800 0 0 1 4.500 8.300Z" fill="#cfcfcf" transform="rotate(45 4.500 4.500)"/></svg>
<svg style="left:1015px;top:709.5px;" width="11" height="8" viewBox="0 0 11 8"><path d="M0 8V0H4L5 1.300H11V8Z" fill="#cfcfcf"/></svg>
<svg style="left:1033.6px;top:709.6px;" width="7.6" height="8.8" viewBox="0 0 9 10"><rect x="0.600" y="0.600" width="7.800" height="8.800" fill="none" stroke="#cfcfcf" stroke-width="1.200"/><path d="M4.500 3V7M2.500 5H6.500" stroke="#cfcfcf" stroke-width="1.100"/></svg>
<svg style="left:1050.4px;top:710.4px;" width="7" height="9.2" viewBox="0 0 8 10"><path d="M0 1.800H8M2.800 1.800V0.600H5.200V1.800" stroke="#8a8a8a" fill="none" stroke-width="1"/><path d="M1 3H7L6.400 9.600H1.600Z" fill="#8a8a8a"/></svg>
</div></body></html>
